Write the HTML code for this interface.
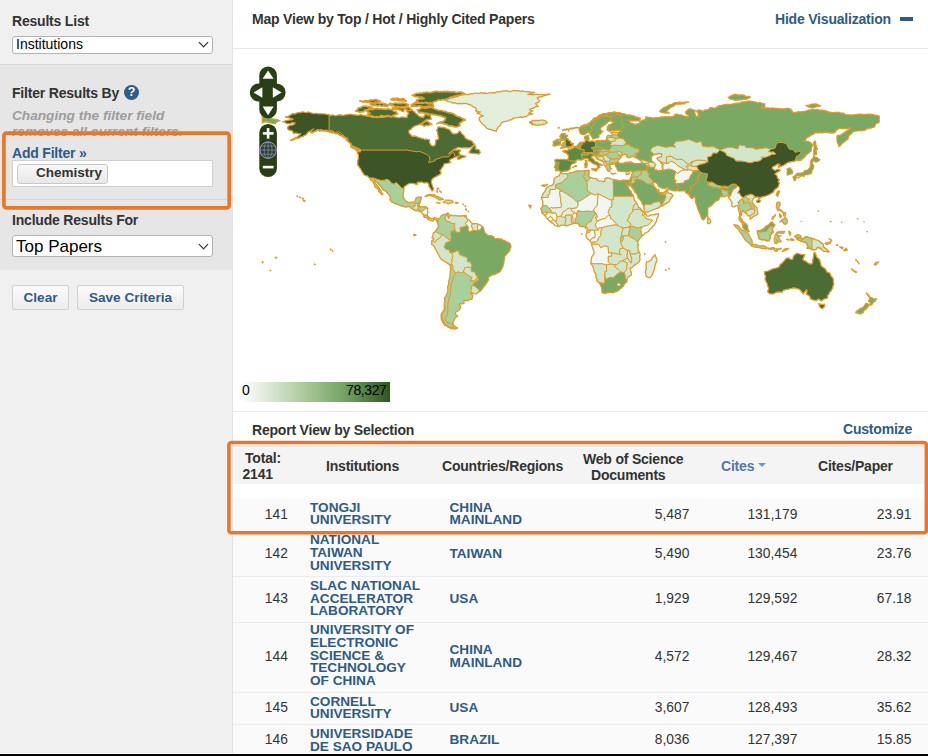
<!DOCTYPE html>
<html><head><meta charset="utf-8">
<style>
*{box-sizing:border-box;margin:0;padding:0}
html,body{width:928px;height:756px;overflow:hidden;background:#fff;font-family:"Liberation Sans",sans-serif}
.a{position:absolute;white-space:nowrap}
.b{font-weight:bold}
#side{position:absolute;left:0;top:0;width:233px;height:756px;background:#f0f0f0;border-right:1px solid #e2e2e2}
#filt{position:absolute;left:0;top:64px;width:232px;height:206px;background:#e6e6e6;border-top:1px solid #d8d8d8}
.h{font-size:14px;letter-spacing:-0.2px;font-weight:bold;color:#333}
.lnk{color:#2e5b8a}
.sel{position:absolute;background:#fff;border:1px solid #b3b3b3;border-radius:3px}
.chev{position:absolute;width:7px;height:7px;border-right:1.5px solid #222;border-bottom:1.5px solid #222;transform:rotate(45deg)}
.btn{position:absolute;border:1px solid #d0d0d0;background:linear-gradient(#fbfbfb,#ececec);border-radius:2px;font-size:13.6px;font-weight:bold;color:#2e5b8a;text-align:center}
#orange1{position:absolute;left:0;top:0}
#orange2{position:absolute;left:0;top:0}
.num{font-size:13.8px;color:#333}
.inst{font-size:13.6px;font-weight:bold;color:#2e5b8a;line-height:12.6px}
</style></head><body>
<div id="side"></div>
<div id="filt"></div>
<div class="a h" style="left:12px;top:12.5px">Results List</div>
<div class="sel" style="left:12px;top:36px;width:201px;height:18px"></div>
<div class="a" style="left:16px;top:36px;font-size:14px;color:#000">Institutions</div>
<div class="chev" style="left:200px;top:39px"></div>

<div class="a h" style="left:12px;top:84.5px">Filter Results By</div>
<div class="a" style="left:124px;top:84.6px;width:15px;height:15px;border-radius:50%;background:#2e5b8a;color:#fff;font-size:12.5px;font-weight:bold;text-align:center;line-height:15px">?</div>
<div class="a" style="left:12px;top:107.5px;font-size:13.65px;font-weight:bold;font-style:italic;color:#9c9c9c;line-height:16px">Changing the filter field<br>removes all current filters.</div>
<div class="a h lnk" style="left:12px;top:144.5px">Add Filter »</div>
<div class="a" style="left:12px;top:160px;width:201px;height:27px;background:#fff;border:1px solid #cfcfcf"></div>
<div class="a" style="left:17px;top:164px;width:91px;height:20px;border:1px solid #c8c8c8;border-radius:3px;background:linear-gradient(#f8f8f8,#e8e8e8)"></div>
<div class="a b" style="left:36px;top:165.3px;font-size:13.5px;color:#333">Chemistry</div>
<div class="a" style="left:0;top:199px;width:232px;height:1px;background:#d6d6d6"></div>
<svg id="orange1" width="232" height="220"><rect x="3.9" y="133.1" width="225.3" height="74.7" rx="2.5" fill="none" stroke="#e8772a" stroke-width="3.7"/></svg>

<div class="a h" style="left:12px;top:211.8px">Include Results For</div>
<div class="sel" style="left:12px;top:235px;width:201px;height:22px"></div>
<div class="a" style="left:16px;top:236.5px;font-size:17px;color:#000">Top Papers</div>
<div class="chev" style="left:200px;top:240.5px"></div>

<div class="btn" style="left:12px;top:285px;width:57px;height:25px;line-height:23px">Clear</div>
<div class="btn" style="left:77px;top:285px;width:107px;height:25px;line-height:23px">Save Criteria</div>

<!-- main -->
<div class="a h" style="left:252px;top:11px">Map View by Top / Hot / Highly Cited Papers</div>
<div class="a h lnk" style="left:775px;top:11px">Hide Visualization</div>
<div class="a" style="left:900px;top:17px;width:13px;height:4px;background:#2e5b8a"></div>
<div class="a" style="left:233px;top:48px;width:695px;height:1px;background:#e6e6e6"></div>

<div id="map"><svg class="a" style="left:0;top:0" width="928" height="410" viewBox="0 0 928 410">
<defs>
<clipPath id="cna"><path d="M282.6 121.6L284.4 121.5L285.9 120.6L287.8 120.4L289.7 119.9L291.4 119.9L293.1 119.4L291.5 118.7L290.0 118.0L287.7 117.6L285.4 117.0L287.1 116.6L288.8 116.0L291.4 114.4L293.0 113.7L294.9 114.0L296.5 113.1L298.4 112.7L300.3 112.6L302.0 111.9L303.7 112.0L305.3 112.6L306.9 112.3L308.6 112.0L310.2 112.7L311.9 113.1L313.6 113.6L315.4 113.4L317.1 113.4L318.8 113.8L320.5 113.6L322.2 113.9L324.0 113.9L325.7 114.1L327.3 114.6L329.1 114.7L330.7 115.5L332.6 114.8L334.2 115.3L335.9 115.8L338.0 115.0L340.2 114.8L341.9 115.2L343.6 115.3L345.3 114.8L347.5 114.6L349.6 114.1L351.6 114.3L353.6 114.8L355.6 114.9L357.8 115.3L359.9 114.8L361.6 114.6L363.3 115.5L365.0 115.3L366.5 116.0L368.2 116.0L369.7 116.5L371.3 116.9L372.7 117.5L374.6 117.1L376.5 117.6L378.4 117.6L380.3 117.1L382.2 117.5L383.9 117.3L385.6 116.8L387.3 116.5L389.0 116.5L390.7 117.1L392.5 116.4L394.2 116.8L395.9 117.1L397.6 117.6L399.3 117.9L401.4 117.0L403.6 117.2L405.3 117.5L407.0 117.5L407.4 115.2L408.7 113.2L407.4 112.0L406.2 110.7L408.1 110.2L410.2 110.6L412.1 109.8L413.2 111.0L414.6 111.9L415.6 113.2L417.4 114.6L419.0 116.3L421.1 116.9L423.3 117.5L424.2 116.1L425.0 114.6L426.7 114.6L428.4 115.0L430.1 114.9L430.6 117.1L431.3 119.2L429.5 119.5L427.6 119.3L425.9 120.1L424.1 121.6L422.3 123.0L419.9 124.2L417.8 125.1L415.6 125.7L413.8 126.6L412.1 127.8L411.3 129.2L409.6 129.8L408.7 131.2L409.2 133.3L410.7 134.8L412.1 136.4L414.3 136.0L416.4 136.4L418.0 137.4L419.9 137.6L421.2 138.6L423.0 138.5L424.5 139.3L426.2 139.1L427.9 139.3L429.6 139.6L429.3 141.4L429.8 143.2L430.9 145.0L432.7 146.1L434.8 145.6L435.3 144.0L435.7 142.4L435.6 140.6L437.1 139.6L438.7 138.8L438.2 136.5L437.8 134.3L437.6 132.2L436.6 130.4L437.5 128.9L437.7 127.3L439.7 126.9L441.8 127.5L443.8 127.3L445.5 128.1L447.2 128.9L449.0 129.3L450.5 130.8L451.5 132.6L453.0 133.6L454.6 134.0L457.5 133.3L459.6 130.9L460.9 132.2L461.8 133.8L463.7 135.2L464.7 137.2L465.9 138.6L467.5 139.4L469.1 140.1L470.8 140.5L472.3 141.5L473.1 143.1L474.7 144.1L472.6 146.1L470.8 147.3L468.7 147.8L467.0 147.8L465.3 147.7L463.5 147.8L461.8 147.8L460.1 147.7L458.4 147.5L456.7 148.0L455.2 148.9L453.7 149.6L452.4 150.7L451.2 151.9L449.9 152.8L448.6 153.8L450.2 152.6L451.9 151.5L453.3 150.1L455.2 149.8L457.3 150.1L459.3 149.7L460.6 150.7L458.9 152.5L459.9 154.7L462.7 155.5L464.4 155.9L466.1 156.2L464.1 157.4L461.8 157.8L460.0 159.0L457.9 159.3L457.2 157.3L460.1 156.2L457.9 156.1L455.8 156.9L454.1 157.6L452.4 158.5L450.2 159.3L449.5 161.0L450.7 162.4L448.1 163.1L446.1 163.3L444.2 163.9L443.7 164.8L443.3 166.3L442.1 167.5L440.9 169.6L439.9 170.6L441.1 173.0L439.6 174.7L437.2 175.9L434.9 177.1L433.5 178.0L432.2 179.0L431.2 181.8L431.8 184.0L432.3 186.1L433.4 187.9L432.9 190.8L431.7 190.8L430.5 188.4L428.9 186.0L428.9 184.0L426.7 182.4L424.1 183.0L421.6 181.9L419.9 182.2L418.1 182.1L417.1 182.6L417.8 184.2L415.6 184.2L414.1 183.6L412.5 183.3L409.6 183.3L407.0 184.8L405.6 185.8L404.1 186.7L403.8 189.6L403.7 191.7L403.2 193.7L403.1 196.3L404.1 198.7L405.8 201.1L408.2 202.3L410.2 202.3L412.1 202.1L414.7 201.8L415.7 199.6L415.9 198.0L417.4 197.4L419.0 197.2L421.6 197.2L420.7 199.7L420.2 202.3L419.3 204.0L419.3 206.6L422.4 206.9L424.1 206.7L425.9 206.9L427.9 208.3L427.6 210.9L428.0 212.6L427.4 214.3L427.7 216.0L429.6 217.9L431.8 218.9L434.4 217.7L436.5 218.2L438.0 219.3L438.4 220.5L436.6 221.2L436.0 219.6L433.9 219.3L432.7 221.3L431.0 220.3L428.4 219.8L426.7 217.7L423.8 217.0L423.6 214.8L421.6 212.6L420.2 211.4L417.6 210.9L415.9 210.5L414.2 210.2L412.1 208.8L410.6 207.9L409.6 206.4L407.4 206.8L405.3 207.1L403.6 206.5L401.9 206.1L400.2 205.3L398.5 204.6L396.7 204.0L394.9 203.7L393.3 202.7L391.2 201.6L389.9 199.7L390.2 197.2L389.2 194.9L387.8 193.5L386.5 192.0L385.2 190.8L383.5 190.1L382.4 189.0L381.8 187.4L379.6 185.2L378.4 184.0L377.4 182.6L375.8 181.0L374.1 179.7L375.0 182.3L376.1 184.2L377.4 186.0L378.7 187.4L379.6 189.1L380.8 190.7L381.5 192.5L383.0 194.3L381.8 194.6L380.4 192.8L378.6 191.5L378.2 188.8L376.4 187.9L374.8 186.7L374.4 184.9L373.6 183.3L372.5 181.3L370.7 179.9L370.0 178.3L368.6 177.3L367.6 175.8L365.7 175.7L364.0 174.7L363.0 173.0L361.8 171.3L360.8 169.2L359.5 167.6L358.5 165.8L357.5 164.8L357.8 162.1L357.8 160.2L358.4 158.5L358.3 156.7L358.4 154.9L357.6 153.0L357.0 151.1L358.6 151.7L360.2 151.8L360.6 150.1L359.0 149.0L356.5 147.8L354.4 146.9L352.2 146.3L351.0 144.1L349.4 142.6L347.9 141.0L346.2 138.4L344.4 137.3L342.8 136.0L341.1 135.7L339.7 134.9L338.5 133.6L336.8 133.3L335.1 133.4L333.3 132.2L331.1 131.9L329.2 131.9L327.4 131.2L325.6 131.1L324.0 130.3L322.2 130.5L320.5 130.8L318.8 130.2L317.1 130.2L315.5 130.9L314.0 131.7L312.3 132.1L310.6 132.6L311.9 129.8L313.7 129.0L312.3 129.8L311.0 130.9L309.4 131.2L307.1 132.9L306.5 134.6L304.3 135.4L302.5 136.7L300.6 136.9L299.1 138.1L296.9 138.2L294.8 138.9L292.8 140.1L290.5 140.3L293.1 138.8L294.9 138.1L296.5 137.2L298.3 136.1L299.9 135.0L300.8 133.6L299.1 134.0L297.4 133.4L295.4 133.0L293.4 133.6L292.8 131.2L290.6 130.3L288.3 129.8L287.4 127.8L288.8 125.9L290.8 125.2L293.0 124.9L294.8 123.7L295.1 122.8L292.8 122.7L290.5 123.3L288.4 123.7L286.2 123.3L284.6 122.2L282.6 121.6Z"/></clipPath>
<clipPath id="csa"><path d="M438.0 219.3L440.1 217.9L441.3 215.8L443.5 214.6L446.4 213.8L447.9 212.8L448.8 214.1L447.8 215.8L448.6 218.4L449.4 216.6L450.3 214.8L453.3 215.8L455.2 215.4L457.2 215.8L458.9 216.0L460.6 216.0L463.5 215.7L466.1 217.0L467.5 219.3L469.2 220.2L470.4 221.7L472.6 223.7L474.5 223.7L476.4 223.7L479.0 224.4L481.5 225.9L482.9 226.8L483.7 228.6L484.1 230.6L485.0 233.1L487.5 235.0L489.6 235.6L491.8 235.7L493.4 236.7L494.5 238.3L496.1 239.0L497.9 238.3L499.5 239.0L501.3 239.0L502.9 240.1L504.6 240.3L505.8 241.6L507.3 242.2L508.9 242.6L510.5 244.3L511.0 247.0L510.1 248.5L509.8 250.3L508.8 252.0L507.2 253.2L506.2 254.9L504.6 256.3L504.5 258.4L504.0 260.6L503.9 262.6L503.3 264.5L502.8 266.8L501.6 268.8L501.0 270.3L500.0 271.7L498.4 272.7L496.6 273.4L494.7 274.3L492.7 274.8L491.0 275.5L489.6 276.4L488.4 277.7L488.3 279.9L487.3 282.0L486.1 283.7L485.0 285.4L483.5 286.8L482.4 288.5L481.2 290.5L479.3 291.7L477.6 292.4L476.6 293.8L473.8 293.6L472.2 292.9L470.6 292.4L471.6 293.8L472.6 295.3L472.4 297.4L471.9 299.4L469.9 299.5L468.2 300.5L466.0 300.4L463.9 300.5L463.9 303.4L462.3 303.8L460.6 303.6L459.1 304.4L460.6 306.8L460.0 308.7L458.7 310.2L457.5 311.3L455.9 312.0L455.0 313.5L456.2 315.0L457.9 315.9L456.5 316.8L455.3 317.9L454.5 319.3L453.8 321.1L452.6 322.4L453.4 323.8L451.5 323.9L453.1 324.8L455.5 326.8L457.5 328.0L455.0 328.9L453.3 328.5L451.5 328.6L449.8 327.8L448.1 327.0L446.7 325.4L444.7 324.8L442.8 322.2L442.6 320.3L441.4 318.8L441.2 317.1L441.3 315.4L442.3 314.1L442.6 312.5L443.5 310.8L444.7 309.4L444.2 306.3L444.3 304.0L444.7 301.7L444.8 299.7L444.5 297.7L445.8 296.5L446.4 294.8L447.5 292.8L447.9 290.5L447.7 288.8L447.6 287.1L448.1 285.4L448.8 283.7L448.5 282.0L449.1 279.8L449.7 277.7L449.9 275.7L450.2 273.7L450.2 271.7L450.7 269.6L450.4 267.6L450.2 265.5L448.1 263.6L446.5 262.5L444.7 261.6L443.0 260.5L441.3 259.4L439.6 256.8L438.6 254.7L437.3 252.8L436.5 250.6L435.3 248.6L434.5 247.1L433.6 245.6L431.5 244.3L432.0 242.6L431.5 241.2L433.0 239.8L433.9 238.1L432.0 237.8L433.0 234.9L433.4 232.6L435.3 231.8L436.0 230.1L437.8 227.8L438.4 226.2L438.0 224.6L437.3 222.0L438.0 219.3Z"/></clipPath>
<clipPath id="caf"><path d="M560.5 172.7L562.9 173.7L564.9 173.6L566.8 173.9L568.8 173.4L570.6 172.7L572.8 172.3L574.9 171.3L577.0 170.9L579.2 171.0L581.2 170.9L583.3 170.8L585.3 170.8L588.1 170.3L589.6 170.8L588.6 171.8L589.6 173.7L587.9 175.2L589.8 177.0L592.0 177.8L593.6 178.3L595.2 178.6L596.8 178.7L597.5 180.2L599.3 181.2L601.4 181.2L604.2 181.8L605.0 180.2L604.9 178.7L607.4 177.6L610.0 178.2L611.5 179.1L613.3 179.4L616.0 179.9L618.2 180.4L620.3 181.1L622.8 180.0L625.9 180.4L627.6 180.1L629.2 180.4L629.9 181.9L630.4 183.5L629.4 186.0L627.5 185.2L626.4 182.8L626.6 185.0L627.8 186.6L628.7 188.3L629.6 189.9L631.1 191.2L631.6 193.1L632.6 194.7L633.6 196.3L633.9 198.5L634.5 200.6L635.9 201.6L636.7 203.2L637.8 205.3L638.6 207.4L640.2 208.2L641.2 209.7L642.7 210.9L643.9 212.4L644.8 213.6L646.2 214.6L647.0 216.2L649.1 215.8L651.1 214.8L653.3 214.8L655.4 214.5L656.9 213.9L658.5 213.6L658.1 216.2L656.9 218.6L656.6 220.9L655.4 222.9L654.5 224.9L652.8 226.3L652.0 227.8L650.5 228.9L649.4 230.2L648.2 231.5L646.8 232.5L645.1 233.1L644.2 234.5L642.6 235.2L641.7 236.6L640.4 237.7L639.3 239.1L638.0 241.1L637.7 243.4L638.2 245.4L637.9 247.4L638.1 249.3L638.6 251.1L640.0 253.7L639.9 255.7L639.6 257.7L640.1 259.7L639.2 261.5L637.7 262.9L636.2 264.1L634.5 265.1L633.1 266.4L631.9 267.6L630.2 268.1L630.5 270.4L631.4 272.5L631.4 275.1L629.7 275.9L628.2 277.0L627.0 278.4L627.1 280.2L626.8 282.0L625.2 283.0L624.2 284.5L623.3 286.2L622.0 287.6L620.1 288.7L618.6 290.2L617.0 291.4L615.1 291.9L613.5 292.5L611.7 292.4L610.0 292.3L608.3 292.6L606.5 292.9L604.9 293.6L602.1 292.6L601.8 289.7L601.7 287.8L600.9 286.2L600.1 284.5L599.3 282.9L598.3 281.6L596.8 280.6L596.9 278.7L595.7 277.1L596.2 275.1L595.4 273.4L594.2 271.4L593.6 269.1L593.0 267.1L592.1 265.1L590.8 263.5L591.0 261.6L591.3 259.8L591.5 258.0L592.0 256.3L592.9 255.0L594.1 253.7L594.0 251.5L593.2 249.4L592.6 247.8L592.0 246.2L591.7 244.4L590.8 241.7L589.7 240.5L588.3 239.5L587.0 238.3L586.2 236.7L586.0 234.9L586.9 232.8L587.0 230.6L587.4 228.0L585.3 226.3L582.6 226.5L580.0 226.3L578.8 225.0L578.3 223.2L576.6 223.7L574.9 223.2L573.2 223.6L571.5 224.1L569.3 224.9L567.2 225.8L565.0 225.7L562.9 225.1L561.1 225.1L559.5 226.2L557.8 226.5L554.8 225.3L553.3 223.5L551.2 222.4L549.6 221.0L548.0 219.6L546.7 218.3L545.8 216.7L544.0 214.8L541.8 212.8L541.7 210.2L540.6 208.8L542.3 206.6L542.9 204.5L542.8 202.3L542.3 200.1L541.3 198.0L541.9 196.2L542.8 194.6L543.6 192.9L544.9 191.5L545.8 189.3L546.7 187.7L548.2 186.5L550.9 185.7L552.4 185.0L553.5 183.6L554.0 181.6L553.8 180.0L554.6 178.3L556.0 177.0L559.0 175.8L559.9 174.3L560.5 172.7Z"/></clipPath>
<clipPath id="ceu"><path d="M561.0 172.3L559.5 170.8L557.9 170.3L555.4 170.6L555.5 168.0L554.3 167.5L555.4 165.1L555.5 162.2L554.7 160.3L556.9 159.1L558.8 159.7L560.7 159.3L562.6 159.3L564.6 159.5L567.5 159.7L568.4 157.8L568.5 155.5L566.8 153.5L564.6 152.3L562.5 151.3L565.1 150.4L567.9 150.6L568.2 148.9L570.9 149.2L573.2 148.0L574.9 146.5L576.8 146.0L578.5 144.1L580.0 142.5L582.6 142.2L585.0 142.2L585.3 139.8L584.5 137.2L585.3 136.2L587.1 135.8L588.8 135.2L588.4 137.2L589.1 138.9L587.7 140.1L589.4 141.5L592.0 140.8L594.9 141.7L596.8 140.7L598.9 140.6L600.7 140.9L602.3 140.1L604.2 140.8L606.9 139.4L606.7 137.2L607.6 135.7L609.3 135.2L611.5 136.2L612.4 134.3L610.9 132.9L613.4 132.1L615.1 132.4L616.9 132.3L618.6 132.1L620.4 131.6L622.3 131.4L619.4 130.4L617.7 130.3L616.0 130.5L614.0 130.7L611.9 130.6L610.0 131.4L608.4 130.9L607.1 129.8L607.4 126.9L609.1 124.7L611.1 124.3L612.6 123.0L614.1 122.0L612.2 121.3L610.2 120.9L608.3 121.5L606.9 123.0L605.6 124.3L604.0 125.2L602.5 126.5L600.7 127.3L600.2 129.5L602.8 131.4L601.8 132.4L600.5 133.9L598.9 134.8L598.9 137.2L597.7 137.9L595.4 138.1L592.9 139.1L592.4 137.6L590.6 135.0L589.4 132.9L588.6 132.1L587.2 132.9L585.8 133.8L584.3 134.5L581.7 134.5L580.2 133.3L579.2 130.4L579.2 127.8L581.0 127.2L582.6 126.1L584.6 125.0L586.9 124.7L588.3 123.3L590.3 122.7L591.2 121.0L592.9 120.1L594.4 119.4L595.4 118.0L598.0 116.5L599.7 115.6L601.4 114.8L603.5 113.9L605.7 113.7L607.4 113.3L609.0 112.6L610.9 112.7L613.0 112.7L615.1 112.2L617.2 112.8L619.4 112.5L621.5 113.3L623.7 113.6L625.4 114.3L627.1 115.1L628.9 114.8L630.6 115.1L632.3 115.6L634.4 116.0L636.2 117.2L638.3 117.5L640.8 118.4L639.1 120.4L637.4 120.8L635.7 120.9L634.0 120.5L632.3 120.9L630.6 120.6L628.0 120.1L629.5 121.0L630.2 122.7L633.1 123.7L635.7 124.4L637.8 123.7L640.0 123.5L639.1 121.3L641.1 120.9L642.9 120.1L644.6 119.7L646.3 120.1L645.6 118.4L646.0 116.7L647.6 117.4L649.4 117.5L651.1 117.7L652.8 118.2L654.5 117.8L656.2 117.5L658.3 117.8L660.2 117.1L662.2 117.0L664.0 116.9L665.7 116.7L667.4 116.9L669.1 116.5L670.8 116.9L672.5 116.7L674.1 115.8L675.1 114.4L677.1 114.2L679.1 115.0L681.1 114.8L683.1 115.9L685.4 116.1L687.6 117.2L688.8 115.8L687.5 114.8L686.2 113.7L685.4 112.0L687.1 110.5L688.8 109.0L690.5 109.0L692.2 109.3L693.7 110.1L695.3 110.3L694.6 112.4L695.2 114.2L695.5 116.1L698.2 116.3L698.2 113.2L696.5 111.0L699.1 109.8L701.6 110.7L703.4 111.5L704.2 110.2L706.3 109.9L708.5 109.8L709.4 108.1L711.2 107.7L713.1 108.0L715.0 108.2L716.9 107.0L718.8 107.4L717.9 106.4L719.6 105.5L721.4 105.6L723.1 104.9L724.8 104.7L726.5 104.5L728.2 104.5L729.9 104.3L731.6 104.1L733.3 103.8L735.0 103.5L736.7 103.2L738.5 103.1L740.2 103.0L741.8 102.0L743.5 101.8L745.3 101.9L747.0 101.2L748.8 101.1L750.5 101.1L752.3 101.3L753.9 102.1L755.6 101.9L757.3 103.0L759.1 102.4L760.7 102.8L762.8 103.7L765.0 104.0L764.5 105.6L765.0 107.2L762.9 107.5L760.7 107.9L762.9 107.7L765.0 108.4L766.7 107.9L768.4 107.9L770.2 108.3L771.9 107.9L773.6 108.1L775.5 108.3L777.4 108.5L779.4 108.6L781.3 109.0L783.3 108.8L785.4 108.8L787.3 108.1L789.0 108.6L790.7 109.3L792.0 110.4L792.4 112.0L794.1 112.7L795.9 112.5L798.4 111.5L800.1 112.0L801.9 111.6L803.6 111.5L805.4 111.3L807.0 110.6L808.7 110.0L810.5 110.0L812.1 109.5L813.9 109.5L815.6 109.7L817.3 109.4L819.0 110.0L820.7 110.2L822.5 110.0L824.2 110.5L825.9 110.8L827.5 111.5L829.7 112.1L831.8 112.5L833.8 112.7L835.7 112.5L837.6 112.3L839.5 112.4L841.1 113.3L843.1 113.0L844.7 114.1L846.4 114.8L848.1 114.8L849.8 114.9L851.5 115.1L853.2 114.8L855.4 114.7L857.5 114.4L859.7 114.1L861.8 114.1L863.9 114.6L866.1 114.3L868.1 114.2L870.1 114.1L872.1 114.4L873.8 114.8L875.5 115.4L877.2 115.4L878.9 115.8L879.4 117.5L879.0 119.2L879.3 120.9L878.9 122.7L876.4 123.3L875.2 125.0L874.7 126.9L872.7 127.4L870.8 128.2L868.7 128.1L866.9 128.8L865.4 130.0L863.5 130.4L861.4 130.6L859.2 130.4L857.1 130.9L855.0 131.2L852.9 131.6L851.7 133.4L849.8 134.6L848.6 136.4L847.8 139.3L846.1 140.3L844.7 141.5L842.1 143.4L840.7 145.2L839.0 146.6L838.5 144.9L837.8 143.2L837.0 141.2L837.0 138.9L836.9 137.2L837.5 135.5L839.5 135.5L841.3 134.6L842.9 133.4L844.7 132.2L846.3 131.1L848.1 130.4L849.7 129.0L850.7 127.3L848.7 128.4L846.4 128.7L843.8 128.7L842.1 128.6L840.4 128.2L838.7 128.7L837.0 129.6L835.8 131.0L834.7 132.6L832.4 133.1L830.1 132.8L828.0 132.6L825.8 132.2L823.8 132.5L821.9 132.9L819.8 132.4L818.2 133.0L816.4 132.6L814.7 132.9L813.2 134.3L811.3 135.0L809.7 136.3L807.9 137.2L806.4 138.1L805.8 139.7L804.4 140.6L806.5 141.5L808.7 141.5L811.3 143.2L812.6 144.9L812.1 146.7L811.3 148.3L811.1 150.9L809.4 152.3L807.9 153.8L806.3 154.7L805.3 156.1L804.2 157.5L802.7 158.6L801.3 160.0L799.3 160.5L796.7 160.0L795.0 161.0L794.3 161.5L792.6 161.4L789.9 162.1L788.0 162.4L786.4 163.6L784.7 164.6L783.2 165.7L782.2 165.8L779.6 166.9L778.2 167.5L778.7 165.8L780.1 164.6L777.9 163.9L775.3 165.7L772.7 166.9L772.2 168.4L774.1 169.8L775.3 170.4L777.5 169.2L780.4 170.3L779.0 171.6L777.0 172.2L774.8 174.0L776.7 175.2L777.7 178.2L779.4 179.9L777.9 181.6L779.6 183.0L778.9 184.4L778.6 186.0L777.4 187.7L775.8 188.8L774.4 190.1L773.6 191.9L771.0 193.7L768.5 194.9L766.2 195.8L764.2 196.3L761.6 197.0L759.9 198.0L759.0 199.2L758.3 197.2L756.5 197.0L753.9 198.0L753.0 199.2L751.8 201.5L753.0 203.2L754.1 204.7L755.3 206.1L757.1 208.0L757.0 209.9L757.8 211.7L757.7 214.1L755.6 215.5L753.5 216.4L752.2 217.7L750.1 219.3L750.3 217.0L749.6 216.0L747.9 215.8L746.4 213.4L744.1 212.2L743.4 210.9L742.1 211.0L741.9 212.8L741.5 214.7L740.5 216.4L740.7 218.2L742.4 219.8L742.8 221.7L744.1 222.2L745.7 223.4L747.7 225.8L747.7 228.2L748.2 229.7L749.1 231.6L747.9 231.8L746.2 230.6L744.1 229.2L742.9 227.1L742.6 224.6L742.2 222.9L741.4 222.2L739.3 220.0L739.0 217.7L739.7 215.3L739.3 212.6L738.8 210.5L738.3 208.7L738.0 206.8L737.4 205.6L735.9 205.7L734.0 206.9L732.1 206.6L731.7 204.5L732.1 202.3L730.8 200.6L729.6 198.9L728.5 197.7L727.9 195.3L726.5 195.5L725.3 196.5L723.1 196.7L721.3 196.3L719.5 197.5L718.8 199.9L715.9 201.1L714.4 202.1L713.3 203.5L711.4 205.6L709.7 206.5L708.2 207.4L707.7 209.1L707.8 210.9L707.8 212.7L707.7 214.5L707.5 216.4L706.3 216.4L704.6 218.8L703.4 220.1L701.8 218.8L700.8 216.0L699.9 213.8L699.2 212.1L698.4 210.4L697.4 207.8L697.0 205.8L696.2 204.0L695.3 201.1L695.5 199.4L695.1 197.7L694.8 196.0L693.6 197.1L692.6 198.4L691.4 198.4L690.3 196.9L689.0 195.8L690.7 194.8L688.3 194.1L686.1 192.9L684.7 190.5L682.9 190.8L681.1 190.8L679.4 191.1L677.8 190.3L676.1 190.8L674.3 190.9L672.5 190.5L670.7 189.8L668.8 189.8L668.1 187.7L666.5 187.6L664.1 188.6L662.2 188.1L660.3 187.5L658.6 186.2L657.7 184.6L656.6 183.1L654.4 182.1L652.8 182.8L653.5 185.2L655.1 187.4L656.6 188.9L657.6 191.2L658.5 189.3L659.0 190.7L659.0 192.4L661.2 192.7L664.0 192.4L666.4 190.3L667.0 188.9L667.2 191.3L668.9 193.1L671.3 193.7L673.0 195.6L671.5 197.5L670.3 199.1L669.4 201.5L667.6 202.7L665.3 203.9L663.6 204.9L662.3 206.0L660.5 206.2L658.5 208.0L656.9 208.4L655.4 209.0L652.8 210.0L650.3 211.0L647.7 212.1L645.1 212.2L644.6 211.2L643.9 208.3L643.6 205.7L642.0 203.5L641.7 201.9L640.7 200.6L639.7 199.3L638.4 198.2L637.6 195.8L636.6 193.4L634.8 192.4L634.0 190.1L632.6 188.4L630.7 185.9L630.4 183.5L629.5 181.9L629.7 180.0L630.6 177.8L631.4 175.8L632.1 173.4L632.6 171.3L631.9 171.0L629.9 171.0L628.1 171.7L626.3 172.2L624.7 171.4L623.0 171.1L620.3 171.3L617.7 170.6L617.2 168.9L616.2 167.2L615.3 165.5L615.7 164.5L613.4 163.9L611.5 164.3L609.7 164.6L609.3 165.5L610.5 166.9L609.8 168.0L611.7 168.7L610.0 169.1L609.7 171.5L607.8 171.0L606.9 169.4L606.7 168.4L605.7 166.7L604.7 165.8L603.8 164.6L604.0 162.4L602.3 161.4L600.4 160.3L598.0 159.5L596.3 158.3L595.6 156.6L593.9 155.7L591.7 156.2L591.8 158.1L593.7 159.3L594.6 161.0L596.5 162.1L598.0 162.2L598.0 163.1L600.6 164.1L602.3 165.1L601.9 165.8L599.7 164.6L599.0 166.2L600.1 167.2L598.7 168.0L597.5 168.9L597.7 167.4L597.3 165.3L596.0 164.5L594.6 164.1L592.9 163.4L590.8 161.7L589.6 161.2L588.6 160.3L588.2 159.0L586.4 158.1L584.3 158.8L582.2 159.8L580.0 160.0L577.8 159.5L575.9 160.5L576.1 162.1L574.0 163.4L572.1 163.9L570.6 165.7L570.1 167.4L570.6 167.9L569.4 169.6L567.2 171.0L564.6 171.1L562.7 171.5L561.0 172.3Z"/></clipPath>
</defs>
<g stroke="#e09b2a" stroke-linejoin="round">
<path d="M282.6 121.6L284.4 121.5L285.9 120.6L287.8 120.4L289.7 119.9L291.4 119.9L293.1 119.4L291.5 118.7L290.0 118.0L287.7 117.6L285.4 117.0L287.1 116.6L288.8 116.0L291.4 114.4L293.0 113.7L294.9 114.0L296.5 113.1L298.4 112.7L300.3 112.6L302.0 111.9L303.7 112.0L305.3 112.6L306.9 112.3L308.6 112.0L310.2 112.7L311.9 113.1L313.6 113.6L315.4 113.4L317.1 113.4L318.8 113.8L320.5 113.6L322.2 113.9L324.0 113.9L325.7 114.1L327.3 114.6L329.1 114.7L330.7 115.5L332.6 114.8L334.2 115.3L335.9 115.8L338.0 115.0L340.2 114.8L341.9 115.2L343.6 115.3L345.3 114.8L347.5 114.6L349.6 114.1L351.6 114.3L353.6 114.8L355.6 114.9L357.8 115.3L359.9 114.8L361.6 114.6L363.3 115.5L365.0 115.3L366.5 116.0L368.2 116.0L369.7 116.5L371.3 116.9L372.7 117.5L374.6 117.1L376.5 117.6L378.4 117.6L380.3 117.1L382.2 117.5L383.9 117.3L385.6 116.8L387.3 116.5L389.0 116.5L390.7 117.1L392.5 116.4L394.2 116.8L395.9 117.1L397.6 117.6L399.3 117.9L401.4 117.0L403.6 117.2L405.3 117.5L407.0 117.5L407.4 115.2L408.7 113.2L407.4 112.0L406.2 110.7L408.1 110.2L410.2 110.6L412.1 109.8L413.2 111.0L414.6 111.9L415.6 113.2L417.4 114.6L419.0 116.3L421.1 116.9L423.3 117.5L424.2 116.1L425.0 114.6L426.7 114.6L428.4 115.0L430.1 114.9L430.6 117.1L431.3 119.2L429.5 119.5L427.6 119.3L425.9 120.1L424.1 121.6L422.3 123.0L419.9 124.2L417.8 125.1L415.6 125.7L413.8 126.6L412.1 127.8L411.3 129.2L409.6 129.8L408.7 131.2L409.2 133.3L410.7 134.8L412.1 136.4L414.3 136.0L416.4 136.4L418.0 137.4L419.9 137.6L421.2 138.6L423.0 138.5L424.5 139.3L426.2 139.1L427.9 139.3L429.6 139.6L429.3 141.4L429.8 143.2L430.9 145.0L432.7 146.1L434.8 145.6L435.3 144.0L435.7 142.4L435.6 140.6L437.1 139.6L438.7 138.8L438.2 136.5L437.8 134.3L437.6 132.2L436.6 130.4L437.5 128.9L437.7 127.3L439.7 126.9L441.8 127.5L443.8 127.3L445.5 128.1L447.2 128.9L449.0 129.3L450.5 130.8L451.5 132.6L453.0 133.6L454.6 134.0L457.5 133.3L459.6 130.9L460.9 132.2L461.8 133.8L463.7 135.2L464.7 137.2L465.9 138.6L467.5 139.4L469.1 140.1L470.8 140.5L472.3 141.5L473.1 143.1L474.7 144.1L472.6 146.1L470.8 147.3L468.7 147.8L467.0 147.8L465.3 147.7L463.5 147.8L461.8 147.8L460.1 147.7L458.4 147.5L456.7 148.0L455.2 148.9L453.7 149.6L452.4 150.7L451.2 151.9L449.9 152.8L448.6 153.8L450.2 152.6L451.9 151.5L453.3 150.1L455.2 149.8L457.3 150.1L459.3 149.7L460.6 150.7L458.9 152.5L459.9 154.7L462.7 155.5L464.4 155.9L466.1 156.2L464.1 157.4L461.8 157.8L460.0 159.0L457.9 159.3L457.2 157.3L460.1 156.2L457.9 156.1L455.8 156.9L454.1 157.6L452.4 158.5L450.2 159.3L449.5 161.0L450.7 162.4L448.1 163.1L446.1 163.3L444.2 163.9L443.7 164.8L443.3 166.3L442.1 167.5L440.9 169.6L439.9 170.6L441.1 173.0L439.6 174.7L437.2 175.9L434.9 177.1L433.5 178.0L432.2 179.0L431.2 181.8L431.8 184.0L432.3 186.1L433.4 187.9L432.9 190.8L431.7 190.8L430.5 188.4L428.9 186.0L428.9 184.0L426.7 182.4L424.1 183.0L421.6 181.9L419.9 182.2L418.1 182.1L417.1 182.6L417.8 184.2L415.6 184.2L414.1 183.6L412.5 183.3L409.6 183.3L407.0 184.8L405.6 185.8L404.1 186.7L403.8 189.6L403.7 191.7L403.2 193.7L403.1 196.3L404.1 198.7L405.8 201.1L408.2 202.3L410.2 202.3L412.1 202.1L414.7 201.8L415.7 199.6L415.9 198.0L417.4 197.4L419.0 197.2L421.6 197.2L420.7 199.7L420.2 202.3L419.3 204.0L419.3 206.6L422.4 206.9L424.1 206.7L425.9 206.9L427.9 208.3L427.6 210.9L428.0 212.6L427.4 214.3L427.7 216.0L429.6 217.9L431.8 218.9L434.4 217.7L436.5 218.2L438.0 219.3L438.4 220.5L436.6 221.2L436.0 219.6L433.9 219.3L432.7 221.3L431.0 220.3L428.4 219.8L426.7 217.7L423.8 217.0L423.6 214.8L421.6 212.6L420.2 211.4L417.6 210.9L415.9 210.5L414.2 210.2L412.1 208.8L410.6 207.9L409.6 206.4L407.4 206.8L405.3 207.1L403.6 206.5L401.9 206.1L400.2 205.3L398.5 204.6L396.7 204.0L394.9 203.7L393.3 202.7L391.2 201.6L389.9 199.7L390.2 197.2L389.2 194.9L387.8 193.5L386.5 192.0L385.2 190.8L383.5 190.1L382.4 189.0L381.8 187.4L379.6 185.2L378.4 184.0L377.4 182.6L375.8 181.0L374.1 179.7L375.0 182.3L376.1 184.2L377.4 186.0L378.7 187.4L379.6 189.1L380.8 190.7L381.5 192.5L383.0 194.3L381.8 194.6L380.4 192.8L378.6 191.5L378.2 188.8L376.4 187.9L374.8 186.7L374.4 184.9L373.6 183.3L372.5 181.3L370.7 179.9L370.0 178.3L368.6 177.3L367.6 175.8L365.7 175.7L364.0 174.7L363.0 173.0L361.8 171.3L360.8 169.2L359.5 167.6L358.5 165.8L357.5 164.8L357.8 162.1L357.8 160.2L358.4 158.5L358.3 156.7L358.4 154.9L357.6 153.0L357.0 151.1L358.6 151.7L360.2 151.8L360.6 150.1L359.0 149.0L356.5 147.8L354.4 146.9L352.2 146.3L351.0 144.1L349.4 142.6L347.9 141.0L346.2 138.4L344.4 137.3L342.8 136.0L341.1 135.7L339.7 134.9L338.5 133.6L336.8 133.3L335.1 133.4L333.3 132.2L331.1 131.9L329.2 131.9L327.4 131.2L325.6 131.1L324.0 130.3L322.2 130.5L320.5 130.8L318.8 130.2L317.1 130.2L315.5 130.9L314.0 131.7L312.3 132.1L310.6 132.6L311.9 129.8L313.7 129.0L312.3 129.8L311.0 130.9L309.4 131.2L307.1 132.9L306.5 134.6L304.3 135.4L302.5 136.7L300.6 136.9L299.1 138.1L296.9 138.2L294.8 138.9L292.8 140.1L290.5 140.3L293.1 138.8L294.9 138.1L296.5 137.2L298.3 136.1L299.9 135.0L300.8 133.6L299.1 134.0L297.4 133.4L295.4 133.0L293.4 133.6L292.8 131.2L290.6 130.3L288.3 129.8L287.4 127.8L288.8 125.9L290.8 125.2L293.0 124.9L294.8 123.7L295.1 122.8L292.8 122.7L290.5 123.3L288.4 123.7L286.2 123.3L284.6 122.2L282.6 121.6Z" fill="#4b6c32" stroke="none"/>
<g clip-path="url(#cna)" stroke-width="1.0">
<path d="M347.9 150.1L407.5 150.1L407.5 149.4L408.2 150.4L417.3 151.8L419.2 151.3L425.2 153.7L426.4 154.3L427.6 155.4L429.3 156.4L430.0 160.3L428.2 162.1L429.3 162.6L435.3 160.7L434.9 159.5L439.6 158.3L442.1 156.9L448.1 156.9L449.3 156.2L450.7 154.0L452.1 152.8L453.8 153.0L454.5 153.5L454.5 155.9L455.8 156.9L467.8 165.5L442.1 199.7L404.2 189.5L400.2 186.9L398.8 185.0L396.9 183.0L395.2 183.0L394.0 184.3L391.6 183.3L388.2 179.5L385.3 179.5L385.3 180.4L380.3 180.4L373.9 178.3L374.1 178.0L370.0 178.3L356.5 179.2Z" fill="#3c5426"/>
<path d="M262.3 105.5L329.1 105.5L329.1 130.7L332.3 130.7L335.1 132.9L336.8 132.1L338.5 131.6L341.9 133.8L344.8 137.0L347.9 138.2L347.9 140.3L339.3 143.2L262.3 148.3Z" fill="#3c5426"/>
<path d="M370.0 178.3L374.1 178.0L373.9 178.3L380.3 180.4L385.3 180.4L385.3 179.5L388.2 179.5L391.6 183.3L394.0 184.3L395.2 183.0L396.9 183.0L398.8 185.0L400.2 186.9L404.2 189.5L407.9 191.2L419.9 196.3L421.6 197.0L420.9 202.3L419.3 202.3L417.9 203.5L414.8 203.5L414.7 204.5L415.7 205.9L413.5 206.6L412.7 208.0L412.7 209.2L411.3 213.4L365.0 199.7L365.0 179.2Z" fill="#a9d09a"/>
<path d="M412.7 209.2L412.7 208.0L413.5 206.6L415.7 205.9L414.7 204.5L414.8 203.5L417.9 203.5L417.8 206.8L419.5 207.1L417.5 209.3L416.3 210.5Z" fill="#d2e6cb"/>
<path d="M417.9 203.5L419.3 202.3L420.7 203.2L419.5 207.1L417.8 206.8Z" fill="#a9d09a"/>
<path d="M417.5 209.3L419.5 207.1L423.3 205.7L428.2 208.3L425.9 208.6L424.7 209.5L422.1 211.2L420.7 211.7L419.9 210.2Z" fill="#a9d09a"/>
<path d="M416.3 210.5L417.5 209.3L419.9 210.2L420.2 211.4L418.1 212.6Z" fill="#d2e6cb"/>
<path d="M420.7 211.7L422.1 211.2L424.7 209.5L425.9 208.6L428.2 208.3L429.3 208.3L427.4 215.3L423.8 215.0L420.7 213.4Z" fill="#f2f6f0"/>
<path d="M423.8 215.0L427.4 215.3L429.1 217.7L428.6 220.3L423.3 218.6Z" fill="#a9d09a"/>
<path d="M429.1 217.7L428.6 220.3L433.6 222.9L438.7 222.0L438.7 217.7Z" fill="#d2e6cb"/>
</g>
<path d="M282.6 121.6L284.4 121.5L285.9 120.6L287.8 120.4L289.7 119.9L291.4 119.9L293.1 119.4L291.5 118.7L290.0 118.0L287.7 117.6L285.4 117.0L287.1 116.6L288.8 116.0L291.4 114.4L293.0 113.7L294.9 114.0L296.5 113.1L298.4 112.7L300.3 112.6L302.0 111.9L303.7 112.0L305.3 112.6L306.9 112.3L308.6 112.0L310.2 112.7L311.9 113.1L313.6 113.6L315.4 113.4L317.1 113.4L318.8 113.8L320.5 113.6L322.2 113.9L324.0 113.9L325.7 114.1L327.3 114.6L329.1 114.7L330.7 115.5L332.6 114.8L334.2 115.3L335.9 115.8L338.0 115.0L340.2 114.8L341.9 115.2L343.6 115.3L345.3 114.8L347.5 114.6L349.6 114.1L351.6 114.3L353.6 114.8L355.6 114.9L357.8 115.3L359.9 114.8L361.6 114.6L363.3 115.5L365.0 115.3L366.5 116.0L368.2 116.0L369.7 116.5L371.3 116.9L372.7 117.5L374.6 117.1L376.5 117.6L378.4 117.6L380.3 117.1L382.2 117.5L383.9 117.3L385.6 116.8L387.3 116.5L389.0 116.5L390.7 117.1L392.5 116.4L394.2 116.8L395.9 117.1L397.6 117.6L399.3 117.9L401.4 117.0L403.6 117.2L405.3 117.5L407.0 117.5L407.4 115.2L408.7 113.2L407.4 112.0L406.2 110.7L408.1 110.2L410.2 110.6L412.1 109.8L413.2 111.0L414.6 111.9L415.6 113.2L417.4 114.6L419.0 116.3L421.1 116.9L423.3 117.5L424.2 116.1L425.0 114.6L426.7 114.6L428.4 115.0L430.1 114.9L430.6 117.1L431.3 119.2L429.5 119.5L427.6 119.3L425.9 120.1L424.1 121.6L422.3 123.0L419.9 124.2L417.8 125.1L415.6 125.7L413.8 126.6L412.1 127.8L411.3 129.2L409.6 129.8L408.7 131.2L409.2 133.3L410.7 134.8L412.1 136.4L414.3 136.0L416.4 136.4L418.0 137.4L419.9 137.6L421.2 138.6L423.0 138.5L424.5 139.3L426.2 139.1L427.9 139.3L429.6 139.6L429.3 141.4L429.8 143.2L430.9 145.0L432.7 146.1L434.8 145.6L435.3 144.0L435.7 142.4L435.6 140.6L437.1 139.6L438.7 138.8L438.2 136.5L437.8 134.3L437.6 132.2L436.6 130.4L437.5 128.9L437.7 127.3L439.7 126.9L441.8 127.5L443.8 127.3L445.5 128.1L447.2 128.9L449.0 129.3L450.5 130.8L451.5 132.6L453.0 133.6L454.6 134.0L457.5 133.3L459.6 130.9L460.9 132.2L461.8 133.8L463.7 135.2L464.7 137.2L465.9 138.6L467.5 139.4L469.1 140.1L470.8 140.5L472.3 141.5L473.1 143.1L474.7 144.1L472.6 146.1L470.8 147.3L468.7 147.8L467.0 147.8L465.3 147.7L463.5 147.8L461.8 147.8L460.1 147.7L458.4 147.5L456.7 148.0L455.2 148.9L453.7 149.6L452.4 150.7L451.2 151.9L449.9 152.8L448.6 153.8L450.2 152.6L451.9 151.5L453.3 150.1L455.2 149.8L457.3 150.1L459.3 149.7L460.6 150.7L458.9 152.5L459.9 154.7L462.7 155.5L464.4 155.9L466.1 156.2L464.1 157.4L461.8 157.8L460.0 159.0L457.9 159.3L457.2 157.3L460.1 156.2L457.9 156.1L455.8 156.9L454.1 157.6L452.4 158.5L450.2 159.3L449.5 161.0L450.7 162.4L448.1 163.1L446.1 163.3L444.2 163.9L443.7 164.8L443.3 166.3L442.1 167.5L440.9 169.6L439.9 170.6L441.1 173.0L439.6 174.7L437.2 175.9L434.9 177.1L433.5 178.0L432.2 179.0L431.2 181.8L431.8 184.0L432.3 186.1L433.4 187.9L432.9 190.8L431.7 190.8L430.5 188.4L428.9 186.0L428.9 184.0L426.7 182.4L424.1 183.0L421.6 181.9L419.9 182.2L418.1 182.1L417.1 182.6L417.8 184.2L415.6 184.2L414.1 183.6L412.5 183.3L409.6 183.3L407.0 184.8L405.6 185.8L404.1 186.7L403.8 189.6L403.7 191.7L403.2 193.7L403.1 196.3L404.1 198.7L405.8 201.1L408.2 202.3L410.2 202.3L412.1 202.1L414.7 201.8L415.7 199.6L415.9 198.0L417.4 197.4L419.0 197.2L421.6 197.2L420.7 199.7L420.2 202.3L419.3 204.0L419.3 206.6L422.4 206.9L424.1 206.7L425.9 206.9L427.9 208.3L427.6 210.9L428.0 212.6L427.4 214.3L427.7 216.0L429.6 217.9L431.8 218.9L434.4 217.7L436.5 218.2L438.0 219.3L438.4 220.5L436.6 221.2L436.0 219.6L433.9 219.3L432.7 221.3L431.0 220.3L428.4 219.8L426.7 217.7L423.8 217.0L423.6 214.8L421.6 212.6L420.2 211.4L417.6 210.9L415.9 210.5L414.2 210.2L412.1 208.8L410.6 207.9L409.6 206.4L407.4 206.8L405.3 207.1L403.6 206.5L401.9 206.1L400.2 205.3L398.5 204.6L396.7 204.0L394.9 203.7L393.3 202.7L391.2 201.6L389.9 199.7L390.2 197.2L389.2 194.9L387.8 193.5L386.5 192.0L385.2 190.8L383.5 190.1L382.4 189.0L381.8 187.4L379.6 185.2L378.4 184.0L377.4 182.6L375.8 181.0L374.1 179.7L375.0 182.3L376.1 184.2L377.4 186.0L378.7 187.4L379.6 189.1L380.8 190.7L381.5 192.5L383.0 194.3L381.8 194.6L380.4 192.8L378.6 191.5L378.2 188.8L376.4 187.9L374.8 186.7L374.4 184.9L373.6 183.3L372.5 181.3L370.7 179.9L370.0 178.3L368.6 177.3L367.6 175.8L365.7 175.7L364.0 174.7L363.0 173.0L361.8 171.3L360.8 169.2L359.5 167.6L358.5 165.8L357.5 164.8L357.8 162.1L357.8 160.2L358.4 158.5L358.3 156.7L358.4 154.9L357.6 153.0L357.0 151.1L358.6 151.7L360.2 151.8L360.6 150.1L359.0 149.0L356.5 147.8L354.4 146.9L352.2 146.3L351.0 144.1L349.4 142.6L347.9 141.0L346.2 138.4L344.4 137.3L342.8 136.0L341.1 135.7L339.7 134.9L338.5 133.6L336.8 133.3L335.1 133.4L333.3 132.2L331.1 131.9L329.2 131.9L327.4 131.2L325.6 131.1L324.0 130.3L322.2 130.5L320.5 130.8L318.8 130.2L317.1 130.2L315.5 130.9L314.0 131.7L312.3 132.1L310.6 132.6L311.9 129.8L313.7 129.0L312.3 129.8L311.0 130.9L309.4 131.2L307.1 132.9L306.5 134.6L304.3 135.4L302.5 136.7L300.6 136.9L299.1 138.1L296.9 138.2L294.8 138.9L292.8 140.1L290.5 140.3L293.1 138.8L294.9 138.1L296.5 137.2L298.3 136.1L299.9 135.0L300.8 133.6L299.1 134.0L297.4 133.4L295.4 133.0L293.4 133.6L292.8 131.2L290.6 130.3L288.3 129.8L287.4 127.8L288.8 125.9L290.8 125.2L293.0 124.9L294.8 123.7L295.1 122.8L292.8 122.7L290.5 123.3L288.4 123.7L286.2 123.3L284.6 122.2L282.6 121.6Z" fill="none" stroke-width="1.3"/>
<path d="M438.0 219.3L440.1 217.9L441.3 215.8L443.5 214.6L446.4 213.8L447.9 212.8L448.8 214.1L447.8 215.8L448.6 218.4L449.4 216.6L450.3 214.8L453.3 215.8L455.2 215.4L457.2 215.8L458.9 216.0L460.6 216.0L463.5 215.7L466.1 217.0L467.5 219.3L469.2 220.2L470.4 221.7L472.6 223.7L474.5 223.7L476.4 223.7L479.0 224.4L481.5 225.9L482.9 226.8L483.7 228.6L484.1 230.6L485.0 233.1L487.5 235.0L489.6 235.6L491.8 235.7L493.4 236.7L494.5 238.3L496.1 239.0L497.9 238.3L499.5 239.0L501.3 239.0L502.9 240.1L504.6 240.3L505.8 241.6L507.3 242.2L508.9 242.6L510.5 244.3L511.0 247.0L510.1 248.5L509.8 250.3L508.8 252.0L507.2 253.2L506.2 254.9L504.6 256.3L504.5 258.4L504.0 260.6L503.9 262.6L503.3 264.5L502.8 266.8L501.6 268.8L501.0 270.3L500.0 271.7L498.4 272.7L496.6 273.4L494.7 274.3L492.7 274.8L491.0 275.5L489.6 276.4L488.4 277.7L488.3 279.9L487.3 282.0L486.1 283.7L485.0 285.4L483.5 286.8L482.4 288.5L481.2 290.5L479.3 291.7L477.6 292.4L476.6 293.8L473.8 293.6L472.2 292.9L470.6 292.4L471.6 293.8L472.6 295.3L472.4 297.4L471.9 299.4L469.9 299.5L468.2 300.5L466.0 300.4L463.9 300.5L463.9 303.4L462.3 303.8L460.6 303.6L459.1 304.4L460.6 306.8L460.0 308.7L458.7 310.2L457.5 311.3L455.9 312.0L455.0 313.5L456.2 315.0L457.9 315.9L456.5 316.8L455.3 317.9L454.5 319.3L453.8 321.1L452.6 322.4L453.4 323.8L451.5 323.9L453.1 324.8L455.5 326.8L457.5 328.0L455.0 328.9L453.3 328.5L451.5 328.6L449.8 327.8L448.1 327.0L446.7 325.4L444.7 324.8L442.8 322.2L442.6 320.3L441.4 318.8L441.2 317.1L441.3 315.4L442.3 314.1L442.6 312.5L443.5 310.8L444.7 309.4L444.2 306.3L444.3 304.0L444.7 301.7L444.8 299.7L444.5 297.7L445.8 296.5L446.4 294.8L447.5 292.8L447.9 290.5L447.7 288.8L447.6 287.1L448.1 285.4L448.8 283.7L448.5 282.0L449.1 279.8L449.7 277.7L449.9 275.7L450.2 273.7L450.2 271.7L450.7 269.6L450.4 267.6L450.2 265.5L448.1 263.6L446.5 262.5L444.7 261.6L443.0 260.5L441.3 259.4L439.6 256.8L438.6 254.7L437.3 252.8L436.5 250.6L435.3 248.6L434.5 247.1L433.6 245.6L431.5 244.3L432.0 242.6L431.5 241.2L433.0 239.8L433.9 238.1L432.0 237.8L433.0 234.9L433.4 232.6L435.3 231.8L436.0 230.1L437.8 227.8L438.4 226.2L438.0 224.6L437.3 222.0L438.0 219.3Z" fill="#d2e6cb" stroke="none"/>
<g clip-path="url(#csa)" stroke-width="1.0">
<path d="M435.3 217.7L447.3 212.6L448.5 213.8L446.8 215.0L445.7 216.2L444.9 218.2L446.6 221.3L450.5 222.0L451.7 223.6L455.0 223.4L454.5 226.3L455.3 230.2L456.0 231.9L454.3 231.1L451.0 231.1L451.4 232.8L450.7 233.0L450.7 234.3L451.4 235.7L450.8 241.2L447.3 238.3L444.5 236.2L441.8 234.2L438.7 233.3L435.6 231.6L433.6 231.4L435.3 222.0Z" fill="#a9d09a"/>
<path d="M448.5 213.8L446.8 215.0L445.7 216.2L444.9 218.2L446.6 221.3L450.5 222.0L451.7 223.6L455.0 223.4L454.5 226.3L455.3 230.2L456.0 231.9L458.4 232.8L460.6 231.4L460.1 227.5L462.7 227.3L463.0 227.1L465.6 226.3L466.8 225.6L466.6 225.1L465.4 223.8L465.9 222.5L467.3 221.7L467.8 219.4L467.8 215.2L448.5 212.6Z" fill="#d2e6cb"/>
<path d="M467.8 219.4L467.3 221.7L465.9 222.5L465.4 223.8L466.6 225.1L466.8 225.6L467.8 226.3L468.3 228.0L467.8 229.7L468.7 231.3L469.9 231.9L472.1 230.9L473.8 230.7L472.4 228.2L471.4 225.8L472.6 223.7L473.0 220.3Z" fill="#f2f6f0"/>
<path d="M472.6 223.7L471.4 225.8L472.4 228.2L473.8 230.7L476.4 230.7L478.1 230.2L477.4 228.0L478.1 224.4L476.4 222.0Z" fill="#d2e6cb"/>
<path d="M478.1 224.4L477.4 228.0L478.1 230.2L480.0 230.2L482.2 226.8L483.2 225.4L478.1 222.9Z" fill="#f2f6f0"/>
<path d="M482.2 226.8L480.0 230.2L478.1 230.2L476.4 230.7L473.8 230.7L472.1 230.9L469.9 231.9L468.7 231.3L467.8 229.7L468.3 228.0L467.8 226.3L466.8 225.6L465.6 226.3L463.0 227.1L462.7 227.3L460.1 227.5L460.6 231.4L458.4 232.8L456.0 231.9L454.3 231.1L451.0 231.1L451.4 232.8L450.7 233.0L450.7 234.3L451.4 235.7L450.8 241.2L445.7 242.7L444.9 245.3L444.0 246.5L445.9 249.4L449.7 250.3L449.8 252.8L451.4 252.7L452.9 252.8L456.5 251.0L458.7 251.1L459.3 254.6L461.8 255.4L464.4 256.8L466.1 257.1L467.1 257.6L467.3 259.9L467.5 261.9L470.6 261.9L470.7 263.6L471.9 264.7L471.0 268.6L471.4 271.7L473.8 271.9L475.2 272.5L475.7 275.1L477.1 275.1L477.1 277.9L478.4 278.0L478.6 278.9L478.4 280.4L475.0 282.0L471.9 285.7L473.3 285.6L475.4 286.8L477.1 288.0L479.1 289.8L479.1 291.7L485.0 295.7L519.2 251.1L493.5 225.4Z" fill="#79a962"/>
<path d="M435.6 231.6L438.7 233.3L441.8 234.2L441.1 236.6L439.4 238.5L436.5 240.0L435.8 241.9L434.4 242.4L433.0 241.2L433.0 239.8L430.1 239.1L430.1 231.4Z" fill="#d2e6cb"/>
<path d="M441.8 234.2L444.5 236.2L447.3 238.3L450.8 241.2L445.7 242.7L444.9 245.3L444.0 246.5L445.9 249.4L449.7 250.3L449.8 252.8L451.4 252.7L452.9 255.6L452.4 258.3L451.7 260.0L452.4 261.8L451.4 263.6L450.0 265.4L447.3 268.3L425.0 251.1L430.1 239.1L433.0 239.8L433.0 241.2L434.4 242.4L435.8 241.9L436.5 240.0L439.4 238.5L441.1 236.6Z" fill="#d2e6cb"/>
<path d="M451.4 252.7L452.9 252.8L456.5 251.0L458.7 251.1L459.3 254.6L461.8 255.4L464.4 256.8L466.1 257.1L467.1 257.6L467.3 259.9L467.5 261.9L470.6 261.9L470.7 263.6L471.9 264.7L471.0 268.6L469.4 267.1L464.9 267.6L463.4 272.0L460.5 273.1L458.1 271.9L455.5 273.1L453.8 270.5L452.7 268.3L452.9 266.5L451.4 263.6L452.4 261.8L451.7 260.0L452.4 258.3L452.9 255.6Z" fill="#d2e6cb"/>
<path d="M471.0 268.6L471.4 271.7L473.8 271.9L475.2 272.5L475.7 275.1L477.1 275.1L477.1 277.9L474.2 281.1L470.2 280.8L471.8 277.5L467.8 275.1L463.9 272.5L463.4 272.0L464.9 267.6L469.4 267.1Z" fill="#d2e6cb"/>
<path d="M471.9 285.7L473.3 285.6L475.4 286.8L477.1 288.0L479.1 289.8L479.1 291.7L479.8 295.7L470.6 292.8L470.9 290.5L471.1 288.8Z" fill="#d2e6cb"/>
<path d="M477.1 277.9L478.4 278.0L478.6 278.9L478.4 280.4L475.0 282.0L471.9 285.7L471.1 288.8L470.9 290.5L470.6 292.8L474.7 297.4L467.8 331.6L453.1 329.9L453.1 324.1L450.7 323.4L447.4 323.1L446.8 321.4L445.2 320.7L444.7 318.5L446.4 316.2L447.3 313.7L447.9 310.7L447.6 307.7L447.8 303.4L449.0 298.2L450.0 294.8L450.7 290.5L450.7 285.4L452.4 281.1L453.6 276.0L455.5 273.1L458.1 271.9L460.5 273.1L463.4 272.0L463.9 272.5L467.8 275.1L471.8 277.5L470.2 280.8L474.2 281.1Z" fill="#a9d09a"/>
<path d="M450.0 265.4L451.4 263.6L452.9 266.5L452.7 268.3L453.8 270.5L455.5 273.1L453.6 276.0L452.4 281.1L450.7 285.4L450.7 290.5L450.0 294.8L449.0 298.2L447.8 303.4L447.6 307.7L447.9 310.7L447.3 313.7L446.4 316.2L444.7 318.5L445.2 320.7L446.8 321.4L447.4 323.1L450.7 323.4L453.1 324.1L453.1 329.9L433.6 329.9L433.6 264.8Z" fill="#a9d09a"/>
</g>
<path d="M438.0 219.3L440.1 217.9L441.3 215.8L443.5 214.6L446.4 213.8L447.9 212.8L448.8 214.1L447.8 215.8L448.6 218.4L449.4 216.6L450.3 214.8L453.3 215.8L455.2 215.4L457.2 215.8L458.9 216.0L460.6 216.0L463.5 215.7L466.1 217.0L467.5 219.3L469.2 220.2L470.4 221.7L472.6 223.7L474.5 223.7L476.4 223.7L479.0 224.4L481.5 225.9L482.9 226.8L483.7 228.6L484.1 230.6L485.0 233.1L487.5 235.0L489.6 235.6L491.8 235.7L493.4 236.7L494.5 238.3L496.1 239.0L497.9 238.3L499.5 239.0L501.3 239.0L502.9 240.1L504.6 240.3L505.8 241.6L507.3 242.2L508.9 242.6L510.5 244.3L511.0 247.0L510.1 248.5L509.8 250.3L508.8 252.0L507.2 253.2L506.2 254.9L504.6 256.3L504.5 258.4L504.0 260.6L503.9 262.6L503.3 264.5L502.8 266.8L501.6 268.8L501.0 270.3L500.0 271.7L498.4 272.7L496.6 273.4L494.7 274.3L492.7 274.8L491.0 275.5L489.6 276.4L488.4 277.7L488.3 279.9L487.3 282.0L486.1 283.7L485.0 285.4L483.5 286.8L482.4 288.5L481.2 290.5L479.3 291.7L477.6 292.4L476.6 293.8L473.8 293.6L472.2 292.9L470.6 292.4L471.6 293.8L472.6 295.3L472.4 297.4L471.9 299.4L469.9 299.5L468.2 300.5L466.0 300.4L463.9 300.5L463.9 303.4L462.3 303.8L460.6 303.6L459.1 304.4L460.6 306.8L460.0 308.7L458.7 310.2L457.5 311.3L455.9 312.0L455.0 313.5L456.2 315.0L457.9 315.9L456.5 316.8L455.3 317.9L454.5 319.3L453.8 321.1L452.6 322.4L453.4 323.8L451.5 323.9L453.1 324.8L455.5 326.8L457.5 328.0L455.0 328.9L453.3 328.5L451.5 328.6L449.8 327.8L448.1 327.0L446.7 325.4L444.7 324.8L442.8 322.2L442.6 320.3L441.4 318.8L441.2 317.1L441.3 315.4L442.3 314.1L442.6 312.5L443.5 310.8L444.7 309.4L444.2 306.3L444.3 304.0L444.7 301.7L444.8 299.7L444.5 297.7L445.8 296.5L446.4 294.8L447.5 292.8L447.9 290.5L447.7 288.8L447.6 287.1L448.1 285.4L448.8 283.7L448.5 282.0L449.1 279.8L449.7 277.7L449.9 275.7L450.2 273.7L450.2 271.7L450.7 269.6L450.4 267.6L450.2 265.5L448.1 263.6L446.5 262.5L444.7 261.6L443.0 260.5L441.3 259.4L439.6 256.8L438.6 254.7L437.3 252.8L436.5 250.6L435.3 248.6L434.5 247.1L433.6 245.6L431.5 244.3L432.0 242.6L431.5 241.2L433.0 239.8L433.9 238.1L432.0 237.8L433.0 234.9L433.4 232.6L435.3 231.8L436.0 230.1L437.8 227.8L438.4 226.2L438.0 224.6L437.3 222.0L438.0 219.3Z" fill="none" stroke-width="1.3"/>
<path d="M560.5 172.7L562.9 173.7L564.9 173.6L566.8 173.9L568.8 173.4L570.6 172.7L572.8 172.3L574.9 171.3L577.0 170.9L579.2 171.0L581.2 170.9L583.3 170.8L585.3 170.8L588.1 170.3L589.6 170.8L588.6 171.8L589.6 173.7L587.9 175.2L589.8 177.0L592.0 177.8L593.6 178.3L595.2 178.6L596.8 178.7L597.5 180.2L599.3 181.2L601.4 181.2L604.2 181.8L605.0 180.2L604.9 178.7L607.4 177.6L610.0 178.2L611.5 179.1L613.3 179.4L616.0 179.9L618.2 180.4L620.3 181.1L622.8 180.0L625.9 180.4L627.6 180.1L629.2 180.4L629.9 181.9L630.4 183.5L629.4 186.0L627.5 185.2L626.4 182.8L626.6 185.0L627.8 186.6L628.7 188.3L629.6 189.9L631.1 191.2L631.6 193.1L632.6 194.7L633.6 196.3L633.9 198.5L634.5 200.6L635.9 201.6L636.7 203.2L637.8 205.3L638.6 207.4L640.2 208.2L641.2 209.7L642.7 210.9L643.9 212.4L644.8 213.6L646.2 214.6L647.0 216.2L649.1 215.8L651.1 214.8L653.3 214.8L655.4 214.5L656.9 213.9L658.5 213.6L658.1 216.2L656.9 218.6L656.6 220.9L655.4 222.9L654.5 224.9L652.8 226.3L652.0 227.8L650.5 228.9L649.4 230.2L648.2 231.5L646.8 232.5L645.1 233.1L644.2 234.5L642.6 235.2L641.7 236.6L640.4 237.7L639.3 239.1L638.0 241.1L637.7 243.4L638.2 245.4L637.9 247.4L638.1 249.3L638.6 251.1L640.0 253.7L639.9 255.7L639.6 257.7L640.1 259.7L639.2 261.5L637.7 262.9L636.2 264.1L634.5 265.1L633.1 266.4L631.9 267.6L630.2 268.1L630.5 270.4L631.4 272.5L631.4 275.1L629.7 275.9L628.2 277.0L627.0 278.4L627.1 280.2L626.8 282.0L625.2 283.0L624.2 284.5L623.3 286.2L622.0 287.6L620.1 288.7L618.6 290.2L617.0 291.4L615.1 291.9L613.5 292.5L611.7 292.4L610.0 292.3L608.3 292.6L606.5 292.9L604.9 293.6L602.1 292.6L601.8 289.7L601.7 287.8L600.9 286.2L600.1 284.5L599.3 282.9L598.3 281.6L596.8 280.6L596.9 278.7L595.7 277.1L596.2 275.1L595.4 273.4L594.2 271.4L593.6 269.1L593.0 267.1L592.1 265.1L590.8 263.5L591.0 261.6L591.3 259.8L591.5 258.0L592.0 256.3L592.9 255.0L594.1 253.7L594.0 251.5L593.2 249.4L592.6 247.8L592.0 246.2L591.7 244.4L590.8 241.7L589.7 240.5L588.3 239.5L587.0 238.3L586.2 236.7L586.0 234.9L586.9 232.8L587.0 230.6L587.4 228.0L585.3 226.3L582.6 226.5L580.0 226.3L578.8 225.0L578.3 223.2L576.6 223.7L574.9 223.2L573.2 223.6L571.5 224.1L569.3 224.9L567.2 225.8L565.0 225.7L562.9 225.1L561.1 225.1L559.5 226.2L557.8 226.5L554.8 225.3L553.3 223.5L551.2 222.4L549.6 221.0L548.0 219.6L546.7 218.3L545.8 216.7L544.0 214.8L541.8 212.8L541.7 210.2L540.6 208.8L542.3 206.6L542.9 204.5L542.8 202.3L542.3 200.1L541.3 198.0L541.9 196.2L542.8 194.6L543.6 192.9L544.9 191.5L545.8 189.3L546.7 187.7L548.2 186.5L550.9 185.7L552.4 185.0L553.5 183.6L554.0 181.6L553.8 180.0L554.6 178.3L556.0 177.0L559.0 175.8L559.9 174.3L560.5 172.7Z" fill="#d2e6cb" stroke="none"/>
<g clip-path="url(#caf)" stroke-width="1.0">
<path d="M566.8 173.9L567.7 175.6L567.7 177.8L565.6 179.0L564.3 179.9L562.0 182.6L559.5 183.3L555.7 184.8L555.7 186.5L555.7 187.2L555.7 189.5L550.0 189.5L550.0 193.7L548.2 194.9L548.3 197.5L541.3 197.5L538.1 192.9L544.9 182.6L556.9 171.5L566.8 170.6Z" fill="#d2e6cb"/>
<path d="M541.3 197.5L548.3 197.5L548.2 194.9L550.0 193.7L550.0 189.5L555.7 189.5L555.7 187.2L562.4 191.2L559.5 191.3L561.5 206.1L561.2 207.4L552.3 208.1L551.1 207.3L549.7 208.8L547.6 206.4L546.6 205.6L544.9 205.6L542.3 206.2L539.8 204.9L539.8 198.0Z" fill="#f2f6f0"/>
<path d="M566.8 173.9L567.7 175.6L567.7 177.8L565.6 179.0L564.3 179.9L562.0 182.6L559.5 183.3L555.7 184.8L555.7 187.2L562.4 191.2L572.7 198.0L576.3 201.5L577.8 201.3L580.5 200.8L591.2 193.7L590.3 192.4L588.1 191.5L586.9 188.6L587.6 186.9L586.9 182.3L584.6 178.3L583.4 176.6L584.6 174.7L584.8 172.3L585.3 170.8L585.3 168.9L566.8 170.6Z" fill="#a9d09a"/>
<path d="M585.3 170.8L584.8 172.3L584.6 174.7L583.4 176.6L584.6 178.3L586.9 182.3L588.1 180.0L590.3 178.5L590.3 177.1L591.2 168.9L585.3 168.9Z" fill="#a9d09a"/>
<path d="M590.3 177.1L590.3 178.5L588.1 180.0L586.9 182.3L587.6 186.9L586.9 188.6L588.1 191.5L590.3 192.4L591.2 193.7L593.9 194.6L594.9 195.3L596.3 194.6L598.0 193.8L611.7 200.6L611.7 199.7L613.4 199.7L613.4 196.3L613.4 184.0L612.9 182.4L613.8 179.9L613.4 175.8L590.3 175.8Z" fill="#d2e6cb"/>
<path d="M613.8 179.9L612.9 182.4L613.4 184.0L613.4 196.3L633.8 196.3L635.7 196.3L634.0 189.5L630.9 183.6L629.4 180.2L628.8 177.5L613.4 177.5Z" fill="#79a962"/>
<path d="M613.4 196.3L633.8 196.3L636.7 203.2L634.0 204.9L633.1 208.3L633.0 209.7L632.4 212.2L630.7 213.8L629.4 215.8L629.0 217.7L627.6 219.6L627.1 220.6L630.0 222.9L631.1 224.6L628.8 226.8L628.0 227.5L623.4 228.0L619.4 226.5L617.5 225.3L613.9 221.2L611.7 219.1L610.9 219.1L609.8 215.3L608.1 212.4L609.0 209.8L609.8 207.4L611.7 207.1L611.7 200.6L611.7 199.7L613.4 199.7Z" fill="#d2e6cb"/>
<path d="M598.0 193.8L611.7 200.6L611.7 207.1L609.8 207.4L609.0 209.8L608.1 212.4L609.8 215.3L607.8 215.8L604.9 218.6L603.0 218.8L597.2 221.2L595.4 217.0L597.3 216.9L596.1 213.1L594.9 212.6L593.9 210.5L593.7 209.3L597.2 205.1L597.5 199.9Z" fill="#f2f6f0"/>
<path d="M591.1 193.7L593.9 194.6L594.9 195.3L596.3 194.6L598.0 193.8L597.5 199.9L597.2 205.1L593.7 209.3L593.9 210.5L592.0 211.6L587.7 211.2L582.6 211.6L577.5 210.9L576.8 214.0L575.4 213.1L574.4 212.2L572.3 211.7L570.9 208.5L576.6 207.8L577.8 205.7L577.8 201.3L580.5 200.8Z" fill="#f2f6f0"/>
<path d="M562.4 191.2L572.7 198.0L576.3 201.5L577.8 201.3L577.8 205.7L576.6 207.8L570.9 208.5L569.4 208.1L567.2 209.0L565.5 210.7L563.2 211.7L561.5 215.2L561.2 216.2L558.6 216.5L557.1 216.4L556.4 215.2L556.0 213.4L554.5 212.9L551.2 212.6L551.1 210.7L549.7 208.8L551.1 207.3L552.3 208.1L561.2 207.4L561.5 206.1L559.5 191.3Z" fill="#e3efde"/>
<path d="M542.3 206.2L544.9 205.6L546.6 205.6L547.6 206.4L549.7 208.8L551.1 210.7L549.9 212.8L547.1 212.2L544.6 212.2L541.8 212.9L538.1 210.0Z" fill="#a9d09a"/>
<path d="M541.8 212.9L544.6 212.2L547.1 212.2L547.1 214.0L544.9 215.5L541.5 215.2Z" fill="#d2e6cb"/>
<path d="M544.9 215.5L547.1 214.0L547.1 212.2L549.9 212.8L551.1 212.8L552.3 213.6L554.5 212.9L556.0 213.4L556.4 215.2L557.1 216.4L556.9 219.4L556.0 221.0L554.5 221.3L553.0 219.4L551.4 216.9L549.4 217.0L547.8 218.6L544.9 218.6Z" fill="#f2f6f0"/>
<path d="M547.8 218.6L549.4 217.0L551.4 216.9L553.0 219.4L552.4 220.3L551.1 222.2L548.3 223.7Z" fill="#f2f6f0"/>
<path d="M551.1 222.2L552.4 220.3L553.0 219.4L554.5 221.3L556.0 221.0L556.2 223.0L557.6 223.9L557.8 226.5L555.2 228.9Z" fill="#f2f6f0"/>
<path d="M557.8 226.5L557.6 223.9L556.2 223.0L556.0 221.0L556.9 219.4L557.1 216.4L558.6 216.5L561.2 216.2L562.5 217.2L565.5 217.0L566.0 218.6L565.1 223.4L565.6 225.4L565.5 228.9Z" fill="#d2e6cb"/>
<path d="M561.2 216.2L561.5 215.2L563.2 211.7L565.5 210.7L567.2 209.0L569.4 208.1L570.9 208.5L572.3 211.7L574.4 212.2L574.7 212.9L572.1 215.2L570.6 215.2L565.8 215.2L565.5 217.0L562.5 217.2Z" fill="#e3efde"/>
<path d="M565.6 225.4L565.1 223.4L566.0 218.6L565.5 217.0L565.8 215.2L570.6 215.2L571.5 216.0L571.3 219.4L571.6 222.4L572.7 223.6L572.3 228.9Z" fill="#d2e6cb"/>
<path d="M572.7 223.6L571.6 222.4L571.3 219.4L571.5 216.0L570.6 215.2L572.1 215.2L573.0 218.1L573.3 223.4Z" fill="#f2f6f0"/>
<path d="M573.3 223.4L573.0 218.1L572.1 215.2L574.7 212.9L576.8 214.0L576.9 216.9L575.2 218.6L575.2 223.2Z" fill="#f2f6f0"/>
<path d="M575.2 223.2L575.2 218.6L576.9 216.9L576.8 214.0L577.5 210.9L582.6 211.6L587.7 211.2L592.0 211.6L593.9 210.5L594.9 212.6L595.6 214.3L593.4 216.5L591.8 219.4L590.8 222.0L588.8 222.0L587.4 223.7L585.7 226.1L579.2 228.9Z" fill="#a9d09a"/>
<path d="M585.7 226.1L587.4 223.7L588.8 222.0L590.8 222.0L591.8 219.4L593.4 216.5L595.6 214.3L594.9 212.6L596.1 213.1L597.3 216.9L595.4 217.0L597.2 221.2L595.4 224.6L596.3 227.1L598.4 230.2L595.4 230.2L590.0 230.2L587.4 230.1L584.3 228.9Z" fill="#d2e6cb"/>
<path d="M597.2 221.2L603.0 218.8L604.9 218.6L607.8 215.8L609.8 215.3L610.9 219.1L611.7 219.1L613.9 221.2L617.5 225.3L614.3 224.9L609.7 225.9L605.7 226.5L602.3 227.8L599.0 228.0L598.4 230.2L596.3 227.1L595.4 224.6Z" fill="#f2f6f0"/>
<path d="M587.4 230.1L590.0 230.2L590.0 232.3L586.9 232.3L584.3 231.4Z" fill="#d2e6cb"/>
<path d="M586.9 232.3L590.0 232.3L590.0 230.2L593.4 230.2L595.4 230.2L594.4 231.6L595.3 234.5L595.1 237.4L592.0 238.1L590.8 240.0L589.6 240.7L584.3 235.7Z" fill="#f2f6f0"/>
<path d="M589.6 240.7L590.8 240.0L592.0 238.1L595.1 237.4L595.3 234.5L594.4 231.6L595.4 230.2L598.4 230.2L599.0 228.0L602.3 227.8L601.1 230.6L600.9 235.7L598.4 237.8L597.8 240.5L595.4 242.2L593.0 241.9L591.5 242.6L589.4 242.6Z" fill="#f2f6f0"/>
<path d="M591.5 244.3L592.5 242.2L595.4 242.2L597.8 240.5L598.4 237.8L600.9 235.7L601.1 230.6L602.3 227.8L605.7 226.5L609.7 225.9L614.3 224.9L617.5 225.3L619.4 226.5L623.4 228.0L622.0 232.3L621.3 236.4L620.4 238.3L620.6 241.7L621.3 244.3L623.4 248.2L620.1 248.6L619.4 252.8L621.3 254.9L617.2 253.9L613.4 253.2L610.0 252.8L608.6 253.2L607.9 246.5L604.9 246.0L600.6 247.7L598.5 244.3L589.4 244.3Z" fill="#d2e6cb"/>
<path d="M591.5 244.3L598.5 244.3L600.6 247.7L604.9 246.0L607.9 246.5L608.6 253.2L611.7 252.8L611.7 256.3L608.3 256.3L608.3 261.8L610.7 264.1L606.4 265.3L602.3 263.8L594.6 263.8L590.8 263.6L587.7 251.1Z" fill="#f2f6f0"/>
<path d="M590.8 263.6L594.6 263.8L602.3 263.8L606.4 265.3L610.7 264.1L613.9 264.5L606.6 264.8L606.6 271.7L604.9 271.7L604.9 276.5L604.9 282.6L603.1 283.5L599.7 282.6L598.9 283.0L591.2 283.7Z" fill="#d2e6cb"/>
<path d="M604.9 271.7L606.6 271.7L606.6 264.8L610.7 264.1L613.9 264.5L615.5 267.4L618.1 269.1L621.0 271.9L616.9 274.4L615.1 276.3L613.4 278.0L609.8 277.5L606.2 279.4L604.9 276.5Z" fill="#d2e6cb"/>
<path d="M598.9 283.0L599.7 282.6L603.1 283.5L604.9 282.6L604.9 276.5L606.2 279.4L609.8 277.5L613.4 278.0L615.1 276.3L616.9 274.4L621.0 271.9L624.2 272.4L625.4 276.0L625.2 278.4L627.0 280.1L630.6 285.4L604.9 299.1L594.6 285.4Z" fill="#79a962"/>
<path d="M616.9 284.5L618.6 283.0L621.0 284.4L619.6 286.1L617.4 285.7Z" fill="#f2f6f0"/>
<path d="M613.9 264.5L616.9 264.7L619.9 261.4L622.7 260.7L627.0 262.6L627.0 266.5L626.3 270.0L624.2 272.4L621.0 271.9L618.1 269.1L615.5 267.4Z" fill="#d2e6cb"/>
<path d="M608.3 256.3L611.7 256.3L611.7 252.8L613.4 253.2L617.2 253.9L621.3 254.9L619.4 252.8L620.1 248.6L623.4 248.2L627.0 250.1L627.6 252.0L627.0 255.4L627.5 258.0L622.7 260.7L619.9 261.4L616.9 264.7L613.9 264.5L610.7 264.1L608.3 261.8Z" fill="#d2e6cb"/>
<path d="M627.0 250.1L629.7 250.3L630.0 253.7L631.9 258.8L631.1 263.3L629.4 260.6L627.5 258.0L627.0 255.4L627.6 252.0Z" fill="#d2e6cb"/>
<path d="M640.0 252.0L634.8 253.9L630.0 253.7L631.9 258.8L631.1 263.3L629.4 260.6L627.5 258.0L622.7 260.7L627.0 262.6L627.0 266.5L626.3 270.0L624.2 272.4L625.4 276.0L625.2 278.4L627.0 280.1L639.1 282.0L647.7 259.7Z" fill="#d2e6cb"/>
<path d="M637.7 242.1L635.2 239.5L628.7 235.7L622.8 235.7L623.4 237.9L622.0 241.4L620.6 241.7L621.3 244.3L623.4 248.2L627.0 250.1L629.7 250.3L630.0 253.7L634.8 253.9L640.0 252.0L644.3 244.3Z" fill="#d2e6cb"/>
<path d="M621.3 236.4L622.8 235.7L623.4 237.9L622.0 241.4L620.6 241.7L620.4 238.3Z" fill="#a9d09a"/>
<path d="M622.0 232.3L621.3 236.4L622.8 235.7L628.7 235.7L628.8 232.3L630.4 227.8L628.0 227.5L623.4 228.0Z" fill="#d2e6cb"/>
<path d="M628.7 235.7L635.2 239.5L637.7 242.1L644.3 239.1L641.9 236.9L640.8 229.2L642.4 227.1L640.3 226.8L638.3 228.2L632.1 226.1L628.8 226.8L630.4 227.8L628.8 232.3Z" fill="#a9d09a"/>
<path d="M633.0 209.7L634.8 209.5L636.6 209.2L639.1 209.2L641.7 210.9L643.2 212.6L642.2 215.2L643.9 215.2L646.0 218.6L652.8 220.3L647.7 225.4L645.1 225.8L642.4 227.1L640.3 226.8L638.3 228.2L632.1 226.1L628.8 226.8L631.1 224.6L630.0 222.9L627.1 220.6L627.6 219.6L629.0 217.7L629.4 215.8L630.7 213.8L632.4 212.2Z" fill="#d2e6cb"/>
<path d="M633.0 209.7L633.1 208.3L634.0 204.9L636.7 203.2L639.1 203.2L644.4 212.2L643.2 212.6L641.7 210.9L639.1 209.2L636.6 209.2L634.8 209.5Z" fill="#d2e6cb"/>
<path d="M643.2 212.6L644.4 212.2L646.0 213.4L643.9 215.2L642.2 215.2Z" fill="#f2f6f0"/>
<path d="M643.9 215.2L646.0 213.4L659.7 212.6L659.7 220.3L644.3 239.1L641.9 236.9L640.8 229.2L642.4 227.1L645.1 225.8L647.7 225.4L652.8 220.3L646.0 218.6Z" fill="#f2f6f0"/>
</g>
<path d="M560.5 172.7L562.9 173.7L564.9 173.6L566.8 173.9L568.8 173.4L570.6 172.7L572.8 172.3L574.9 171.3L577.0 170.9L579.2 171.0L581.2 170.9L583.3 170.8L585.3 170.8L588.1 170.3L589.6 170.8L588.6 171.8L589.6 173.7L587.9 175.2L589.8 177.0L592.0 177.8L593.6 178.3L595.2 178.6L596.8 178.7L597.5 180.2L599.3 181.2L601.4 181.2L604.2 181.8L605.0 180.2L604.9 178.7L607.4 177.6L610.0 178.2L611.5 179.1L613.3 179.4L616.0 179.9L618.2 180.4L620.3 181.1L622.8 180.0L625.9 180.4L627.6 180.1L629.2 180.4L629.9 181.9L630.4 183.5L629.4 186.0L627.5 185.2L626.4 182.8L626.6 185.0L627.8 186.6L628.7 188.3L629.6 189.9L631.1 191.2L631.6 193.1L632.6 194.7L633.6 196.3L633.9 198.5L634.5 200.6L635.9 201.6L636.7 203.2L637.8 205.3L638.6 207.4L640.2 208.2L641.2 209.7L642.7 210.9L643.9 212.4L644.8 213.6L646.2 214.6L647.0 216.2L649.1 215.8L651.1 214.8L653.3 214.8L655.4 214.5L656.9 213.9L658.5 213.6L658.1 216.2L656.9 218.6L656.6 220.9L655.4 222.9L654.5 224.9L652.8 226.3L652.0 227.8L650.5 228.9L649.4 230.2L648.2 231.5L646.8 232.5L645.1 233.1L644.2 234.5L642.6 235.2L641.7 236.6L640.4 237.7L639.3 239.1L638.0 241.1L637.7 243.4L638.2 245.4L637.9 247.4L638.1 249.3L638.6 251.1L640.0 253.7L639.9 255.7L639.6 257.7L640.1 259.7L639.2 261.5L637.7 262.9L636.2 264.1L634.5 265.1L633.1 266.4L631.9 267.6L630.2 268.1L630.5 270.4L631.4 272.5L631.4 275.1L629.7 275.9L628.2 277.0L627.0 278.4L627.1 280.2L626.8 282.0L625.2 283.0L624.2 284.5L623.3 286.2L622.0 287.6L620.1 288.7L618.6 290.2L617.0 291.4L615.1 291.9L613.5 292.5L611.7 292.4L610.0 292.3L608.3 292.6L606.5 292.9L604.9 293.6L602.1 292.6L601.8 289.7L601.7 287.8L600.9 286.2L600.1 284.5L599.3 282.9L598.3 281.6L596.8 280.6L596.9 278.7L595.7 277.1L596.2 275.1L595.4 273.4L594.2 271.4L593.6 269.1L593.0 267.1L592.1 265.1L590.8 263.5L591.0 261.6L591.3 259.8L591.5 258.0L592.0 256.3L592.9 255.0L594.1 253.7L594.0 251.5L593.2 249.4L592.6 247.8L592.0 246.2L591.7 244.4L590.8 241.7L589.7 240.5L588.3 239.5L587.0 238.3L586.2 236.7L586.0 234.9L586.9 232.8L587.0 230.6L587.4 228.0L585.3 226.3L582.6 226.5L580.0 226.3L578.8 225.0L578.3 223.2L576.6 223.7L574.9 223.2L573.2 223.6L571.5 224.1L569.3 224.9L567.2 225.8L565.0 225.7L562.9 225.1L561.1 225.1L559.5 226.2L557.8 226.5L554.8 225.3L553.3 223.5L551.2 222.4L549.6 221.0L548.0 219.6L546.7 218.3L545.8 216.7L544.0 214.8L541.8 212.8L541.7 210.2L540.6 208.8L542.3 206.6L542.9 204.5L542.8 202.3L542.3 200.1L541.3 198.0L541.9 196.2L542.8 194.6L543.6 192.9L544.9 191.5L545.8 189.3L546.7 187.7L548.2 186.5L550.9 185.7L552.4 185.0L553.5 183.6L554.0 181.6L553.8 180.0L554.6 178.3L556.0 177.0L559.0 175.8L559.9 174.3L560.5 172.7Z" fill="none" stroke-width="1.3"/>
<path d="M561.0 172.3L559.5 170.8L557.9 170.3L555.4 170.6L555.5 168.0L554.3 167.5L555.4 165.1L555.5 162.2L554.7 160.3L556.9 159.1L558.8 159.7L560.7 159.3L562.6 159.3L564.6 159.5L567.5 159.7L568.4 157.8L568.5 155.5L566.8 153.5L564.6 152.3L562.5 151.3L565.1 150.4L567.9 150.6L568.2 148.9L570.9 149.2L573.2 148.0L574.9 146.5L576.8 146.0L578.5 144.1L580.0 142.5L582.6 142.2L585.0 142.2L585.3 139.8L584.5 137.2L585.3 136.2L587.1 135.8L588.8 135.2L588.4 137.2L589.1 138.9L587.7 140.1L589.4 141.5L592.0 140.8L594.9 141.7L596.8 140.7L598.9 140.6L600.7 140.9L602.3 140.1L604.2 140.8L606.9 139.4L606.7 137.2L607.6 135.7L609.3 135.2L611.5 136.2L612.4 134.3L610.9 132.9L613.4 132.1L615.1 132.4L616.9 132.3L618.6 132.1L620.4 131.6L622.3 131.4L619.4 130.4L617.7 130.3L616.0 130.5L614.0 130.7L611.9 130.6L610.0 131.4L608.4 130.9L607.1 129.8L607.4 126.9L609.1 124.7L611.1 124.3L612.6 123.0L614.1 122.0L612.2 121.3L610.2 120.9L608.3 121.5L606.9 123.0L605.6 124.3L604.0 125.2L602.5 126.5L600.7 127.3L600.2 129.5L602.8 131.4L601.8 132.4L600.5 133.9L598.9 134.8L598.9 137.2L597.7 137.9L595.4 138.1L592.9 139.1L592.4 137.6L590.6 135.0L589.4 132.9L588.6 132.1L587.2 132.9L585.8 133.8L584.3 134.5L581.7 134.5L580.2 133.3L579.2 130.4L579.2 127.8L581.0 127.2L582.6 126.1L584.6 125.0L586.9 124.7L588.3 123.3L590.3 122.7L591.2 121.0L592.9 120.1L594.4 119.4L595.4 118.0L598.0 116.5L599.7 115.6L601.4 114.8L603.5 113.9L605.7 113.7L607.4 113.3L609.0 112.6L610.9 112.7L613.0 112.7L615.1 112.2L617.2 112.8L619.4 112.5L621.5 113.3L623.7 113.6L625.4 114.3L627.1 115.1L628.9 114.8L630.6 115.1L632.3 115.6L634.4 116.0L636.2 117.2L638.3 117.5L640.8 118.4L639.1 120.4L637.4 120.8L635.7 120.9L634.0 120.5L632.3 120.9L630.6 120.6L628.0 120.1L629.5 121.0L630.2 122.7L633.1 123.7L635.7 124.4L637.8 123.7L640.0 123.5L639.1 121.3L641.1 120.9L642.9 120.1L644.6 119.7L646.3 120.1L645.6 118.4L646.0 116.7L647.6 117.4L649.4 117.5L651.1 117.7L652.8 118.2L654.5 117.8L656.2 117.5L658.3 117.8L660.2 117.1L662.2 117.0L664.0 116.9L665.7 116.7L667.4 116.9L669.1 116.5L670.8 116.9L672.5 116.7L674.1 115.8L675.1 114.4L677.1 114.2L679.1 115.0L681.1 114.8L683.1 115.9L685.4 116.1L687.6 117.2L688.8 115.8L687.5 114.8L686.2 113.7L685.4 112.0L687.1 110.5L688.8 109.0L690.5 109.0L692.2 109.3L693.7 110.1L695.3 110.3L694.6 112.4L695.2 114.2L695.5 116.1L698.2 116.3L698.2 113.2L696.5 111.0L699.1 109.8L701.6 110.7L703.4 111.5L704.2 110.2L706.3 109.9L708.5 109.8L709.4 108.1L711.2 107.7L713.1 108.0L715.0 108.2L716.9 107.0L718.8 107.4L717.9 106.4L719.6 105.5L721.4 105.6L723.1 104.9L724.8 104.7L726.5 104.5L728.2 104.5L729.9 104.3L731.6 104.1L733.3 103.8L735.0 103.5L736.7 103.2L738.5 103.1L740.2 103.0L741.8 102.0L743.5 101.8L745.3 101.9L747.0 101.2L748.8 101.1L750.5 101.1L752.3 101.3L753.9 102.1L755.6 101.9L757.3 103.0L759.1 102.4L760.7 102.8L762.8 103.7L765.0 104.0L764.5 105.6L765.0 107.2L762.9 107.5L760.7 107.9L762.9 107.7L765.0 108.4L766.7 107.9L768.4 107.9L770.2 108.3L771.9 107.9L773.6 108.1L775.5 108.3L777.4 108.5L779.4 108.6L781.3 109.0L783.3 108.8L785.4 108.8L787.3 108.1L789.0 108.6L790.7 109.3L792.0 110.4L792.4 112.0L794.1 112.7L795.9 112.5L798.4 111.5L800.1 112.0L801.9 111.6L803.6 111.5L805.4 111.3L807.0 110.6L808.7 110.0L810.5 110.0L812.1 109.5L813.9 109.5L815.6 109.7L817.3 109.4L819.0 110.0L820.7 110.2L822.5 110.0L824.2 110.5L825.9 110.8L827.5 111.5L829.7 112.1L831.8 112.5L833.8 112.7L835.7 112.5L837.6 112.3L839.5 112.4L841.1 113.3L843.1 113.0L844.7 114.1L846.4 114.8L848.1 114.8L849.8 114.9L851.5 115.1L853.2 114.8L855.4 114.7L857.5 114.4L859.7 114.1L861.8 114.1L863.9 114.6L866.1 114.3L868.1 114.2L870.1 114.1L872.1 114.4L873.8 114.8L875.5 115.4L877.2 115.4L878.9 115.8L879.4 117.5L879.0 119.2L879.3 120.9L878.9 122.7L876.4 123.3L875.2 125.0L874.7 126.9L872.7 127.4L870.8 128.2L868.7 128.1L866.9 128.8L865.4 130.0L863.5 130.4L861.4 130.6L859.2 130.4L857.1 130.9L855.0 131.2L852.9 131.6L851.7 133.4L849.8 134.6L848.6 136.4L847.8 139.3L846.1 140.3L844.7 141.5L842.1 143.4L840.7 145.2L839.0 146.6L838.5 144.9L837.8 143.2L837.0 141.2L837.0 138.9L836.9 137.2L837.5 135.5L839.5 135.5L841.3 134.6L842.9 133.4L844.7 132.2L846.3 131.1L848.1 130.4L849.7 129.0L850.7 127.3L848.7 128.4L846.4 128.7L843.8 128.7L842.1 128.6L840.4 128.2L838.7 128.7L837.0 129.6L835.8 131.0L834.7 132.6L832.4 133.1L830.1 132.8L828.0 132.6L825.8 132.2L823.8 132.5L821.9 132.9L819.8 132.4L818.2 133.0L816.4 132.6L814.7 132.9L813.2 134.3L811.3 135.0L809.7 136.3L807.9 137.2L806.4 138.1L805.8 139.7L804.4 140.6L806.5 141.5L808.7 141.5L811.3 143.2L812.6 144.9L812.1 146.7L811.3 148.3L811.1 150.9L809.4 152.3L807.9 153.8L806.3 154.7L805.3 156.1L804.2 157.5L802.7 158.6L801.3 160.0L799.3 160.5L796.7 160.0L795.0 161.0L794.3 161.5L792.6 161.4L789.9 162.1L788.0 162.4L786.4 163.6L784.7 164.6L783.2 165.7L782.2 165.8L779.6 166.9L778.2 167.5L778.7 165.8L780.1 164.6L777.9 163.9L775.3 165.7L772.7 166.9L772.2 168.4L774.1 169.8L775.3 170.4L777.5 169.2L780.4 170.3L779.0 171.6L777.0 172.2L774.8 174.0L776.7 175.2L777.7 178.2L779.4 179.9L777.9 181.6L779.6 183.0L778.9 184.4L778.6 186.0L777.4 187.7L775.8 188.8L774.4 190.1L773.6 191.9L771.0 193.7L768.5 194.9L766.2 195.8L764.2 196.3L761.6 197.0L759.9 198.0L759.0 199.2L758.3 197.2L756.5 197.0L753.9 198.0L753.0 199.2L751.8 201.5L753.0 203.2L754.1 204.7L755.3 206.1L757.1 208.0L757.0 209.9L757.8 211.7L757.7 214.1L755.6 215.5L753.5 216.4L752.2 217.7L750.1 219.3L750.3 217.0L749.6 216.0L747.9 215.8L746.4 213.4L744.1 212.2L743.4 210.9L742.1 211.0L741.9 212.8L741.5 214.7L740.5 216.4L740.7 218.2L742.4 219.8L742.8 221.7L744.1 222.2L745.7 223.4L747.7 225.8L747.7 228.2L748.2 229.7L749.1 231.6L747.9 231.8L746.2 230.6L744.1 229.2L742.9 227.1L742.6 224.6L742.2 222.9L741.4 222.2L739.3 220.0L739.0 217.7L739.7 215.3L739.3 212.6L738.8 210.5L738.3 208.7L738.0 206.8L737.4 205.6L735.9 205.7L734.0 206.9L732.1 206.6L731.7 204.5L732.1 202.3L730.8 200.6L729.6 198.9L728.5 197.7L727.9 195.3L726.5 195.5L725.3 196.5L723.1 196.7L721.3 196.3L719.5 197.5L718.8 199.9L715.9 201.1L714.4 202.1L713.3 203.5L711.4 205.6L709.7 206.5L708.2 207.4L707.7 209.1L707.8 210.9L707.8 212.7L707.7 214.5L707.5 216.4L706.3 216.4L704.6 218.8L703.4 220.1L701.8 218.8L700.8 216.0L699.9 213.8L699.2 212.1L698.4 210.4L697.4 207.8L697.0 205.8L696.2 204.0L695.3 201.1L695.5 199.4L695.1 197.7L694.8 196.0L693.6 197.1L692.6 198.4L691.4 198.4L690.3 196.9L689.0 195.8L690.7 194.8L688.3 194.1L686.1 192.9L684.7 190.5L682.9 190.8L681.1 190.8L679.4 191.1L677.8 190.3L676.1 190.8L674.3 190.9L672.5 190.5L670.7 189.8L668.8 189.8L668.1 187.7L666.5 187.6L664.1 188.6L662.2 188.1L660.3 187.5L658.6 186.2L657.7 184.6L656.6 183.1L654.4 182.1L652.8 182.8L653.5 185.2L655.1 187.4L656.6 188.9L657.6 191.2L658.5 189.3L659.0 190.7L659.0 192.4L661.2 192.7L664.0 192.4L666.4 190.3L667.0 188.9L667.2 191.3L668.9 193.1L671.3 193.7L673.0 195.6L671.5 197.5L670.3 199.1L669.4 201.5L667.6 202.7L665.3 203.9L663.6 204.9L662.3 206.0L660.5 206.2L658.5 208.0L656.9 208.4L655.4 209.0L652.8 210.0L650.3 211.0L647.7 212.1L645.1 212.2L644.6 211.2L643.9 208.3L643.6 205.7L642.0 203.5L641.7 201.9L640.7 200.6L639.7 199.3L638.4 198.2L637.6 195.8L636.6 193.4L634.8 192.4L634.0 190.1L632.6 188.4L630.7 185.9L630.4 183.5L629.5 181.9L629.7 180.0L630.6 177.8L631.4 175.8L632.1 173.4L632.6 171.3L631.9 171.0L629.9 171.0L628.1 171.7L626.3 172.2L624.7 171.4L623.0 171.1L620.3 171.3L617.7 170.6L617.2 168.9L616.2 167.2L615.3 165.5L615.7 164.5L613.4 163.9L611.5 164.3L609.7 164.6L609.3 165.5L610.5 166.9L609.8 168.0L611.7 168.7L610.0 169.1L609.7 171.5L607.8 171.0L606.9 169.4L606.7 168.4L605.7 166.7L604.7 165.8L603.8 164.6L604.0 162.4L602.3 161.4L600.4 160.3L598.0 159.5L596.3 158.3L595.6 156.6L593.9 155.7L591.7 156.2L591.8 158.1L593.7 159.3L594.6 161.0L596.5 162.1L598.0 162.2L598.0 163.1L600.6 164.1L602.3 165.1L601.9 165.8L599.7 164.6L599.0 166.2L600.1 167.2L598.7 168.0L597.5 168.9L597.7 167.4L597.3 165.3L596.0 164.5L594.6 164.1L592.9 163.4L590.8 161.7L589.6 161.2L588.6 160.3L588.2 159.0L586.4 158.1L584.3 158.8L582.2 159.8L580.0 160.0L577.8 159.5L575.9 160.5L576.1 162.1L574.0 163.4L572.1 163.9L570.6 165.7L570.1 167.4L570.6 167.9L569.4 169.6L567.2 171.0L564.6 171.1L562.7 171.5L561.0 172.3Z" fill="#79a962" stroke="none"/>
<g clip-path="url(#ceu)" stroke-width="1.0">
<path d="M554.3 161.7L556.6 161.9L559.5 162.6L558.8 163.8L558.6 166.0L557.8 166.5L558.6 168.6L557.9 170.3L553.5 171.5Z" fill="#79a962"/>
<path d="M554.3 158.6L567.5 159.7L569.7 160.7L573.2 161.0L576.1 161.4L577.5 165.5L567.2 173.2L561.0 172.3L557.9 170.3L558.6 168.6L557.8 166.5L558.6 166.0L558.8 163.8L559.5 162.6L556.6 161.9L554.3 161.7Z" fill="#5c8b44"/>
<path d="M567.5 159.7L562.0 150.1L573.2 146.6L574.9 146.5L577.8 148.5L580.5 149.2L581.6 149.2L584.6 150.1L583.6 152.5L582.4 153.0L580.9 154.9L582.6 155.4L581.9 156.7L582.6 158.3L583.4 159.0L580.9 162.1L576.1 161.4L573.2 161.0L569.7 160.7Z" fill="#5c8b44"/>
<path d="M574.9 146.5L576.6 146.0L577.8 146.0L579.2 145.8L580.7 147.0L581.0 148.2L580.5 149.2L577.8 148.5Z" fill="#79a962"/>
<path d="M576.6 146.0L578.3 142.4L582.9 142.7L582.6 144.6L580.9 145.3L580.7 147.0L579.2 145.8L577.8 146.0Z" fill="#79a962"/>
<path d="M580.7 147.0L580.9 145.3L582.6 144.6L582.9 142.7L583.4 140.6L585.3 140.0L587.6 140.1L589.4 140.6L594.9 141.7L595.3 142.9L595.6 143.9L595.8 146.6L591.3 147.8L594.2 150.4L592.9 152.6L588.6 152.6L586.9 152.5L583.6 152.5L584.6 150.1L581.6 149.2L581.0 148.2Z" fill="#4b6c32"/>
<path d="M585.3 140.0L587.6 140.1L591.2 140.6L592.9 138.1L589.4 134.6L584.3 135.5L583.4 139.8Z" fill="#79a962"/>
<path d="M580.9 154.9L582.4 153.0L583.6 152.5L586.9 152.5L588.6 153.7L588.1 154.9L585.0 155.2L582.6 155.4Z" fill="#79a962"/>
<path d="M582.6 158.3L581.9 156.7L582.6 155.4L585.0 155.2L588.1 154.9L588.6 153.7L591.5 153.3L594.1 154.3L594.2 155.9L594.6 156.9L603.1 164.6L598.0 170.6L583.4 159.0Z" fill="#5c8b44"/>
<path d="M586.9 152.5L588.6 152.6L592.9 152.6L594.2 150.4L596.3 150.1L599.5 150.7L599.9 151.8L598.9 153.5L598.2 154.0L594.1 154.3L591.5 153.3L588.6 153.7Z" fill="#79a962"/>
<path d="M591.3 147.8L595.8 146.6L598.9 147.5L602.8 148.5L602.8 149.2L599.7 150.6L599.5 150.7L596.3 150.1L594.2 150.4Z" fill="#79a962"/>
<path d="M594.9 141.7L601.4 138.9L609.7 140.8L610.9 141.7L611.4 143.7L610.3 144.9L611.7 147.0L609.3 149.9L604.0 149.2L602.8 149.2L602.8 148.5L598.9 147.5L595.8 146.6L595.6 143.9L595.3 142.9Z" fill="#79a962"/>
<path d="M599.9 151.8L599.5 150.7L599.7 150.6L602.8 149.2L604.0 149.2L609.3 149.9L608.5 151.1L605.7 151.4L602.8 152.1Z" fill="#a9d09a"/>
<path d="M598.2 154.0L598.9 153.5L599.9 151.8L602.8 152.1L605.7 151.4L608.5 151.1L609.8 151.9L606.6 154.9L605.2 155.0L602.8 155.4L600.2 155.4Z" fill="#a9d09a"/>
<path d="M594.1 154.3L598.2 154.0L598.9 154.5L597.3 155.5L596.6 156.1L593.9 156.1L594.2 155.9Z" fill="#79a962"/>
<path d="M593.9 156.1L596.6 156.1L597.3 155.5L598.9 154.5L598.2 154.0L600.2 155.4L602.8 155.4L603.1 156.6L598.9 156.6L597.7 157.8L598.4 159.7L600.7 160.5L602.3 161.4L594.6 158.6Z" fill="#a9d09a"/>
<path d="M597.7 157.8L598.9 156.6L603.1 156.6L604.2 158.6L602.6 160.2L600.7 160.5L598.4 159.7Z" fill="#d2e6cb"/>
<path d="M603.1 156.6L602.8 155.4L605.2 155.0L607.3 156.6L609.1 157.4L609.5 158.3L610.0 159.5L609.0 161.5L607.4 161.7L605.4 160.7L603.5 159.5L604.2 158.6Z" fill="#d2e6cb"/>
<path d="M602.3 161.4L602.6 160.2L603.5 159.5L605.4 160.7L604.2 161.7L603.8 162.2L601.4 162.1Z" fill="#d2e6cb"/>
<path d="M603.8 162.2L604.2 161.7L605.7 161.7L606.2 163.9L606.6 165.5L605.2 166.2L601.4 165.5Z" fill="#f2f6f0"/>
<path d="M605.7 161.7L607.4 161.7L609.0 161.5L610.0 163.3L608.3 163.6L606.2 163.9Z" fill="#d2e6cb"/>
<path d="M605.2 166.2L606.6 165.5L606.2 163.9L608.3 163.6L610.0 163.3L615.7 162.6L615.3 164.5L618.6 174.0L603.1 172.3Z" fill="#a9d09a"/>
<path d="M609.0 161.5L610.0 159.5L609.5 158.3L613.4 159.1L616.9 158.5L619.6 159.1L622.0 160.3L618.6 162.1L615.7 162.6L610.0 163.3Z" fill="#a9d09a"/>
<path d="M606.6 154.9L609.8 151.9L613.3 152.3L616.2 151.4L618.9 154.3L618.9 156.1L621.5 156.6L622.0 158.6L619.6 159.1L616.9 158.5L613.4 159.1L609.5 158.3L609.1 157.4L607.3 156.6L605.2 155.0Z" fill="#a9d09a"/>
<path d="M616.2 151.4L617.7 150.9L620.6 151.9L622.0 154.3L618.9 156.1L618.9 154.3Z" fill="#d2e6cb"/>
<path d="M609.3 149.9L611.7 147.0L611.4 145.6L614.3 145.1L622.8 145.8L625.4 144.6L629.0 144.6L631.1 146.6L636.0 148.3L639.1 149.2L639.1 151.8L636.2 153.3L634.8 153.8L632.3 158.6L622.0 156.9L621.5 156.6L618.9 156.1L622.0 154.3L620.6 151.9L617.7 150.9L616.2 151.4L613.3 152.3L609.8 151.9L608.5 151.1Z" fill="#a9d09a"/>
<path d="M610.9 141.7L614.8 141.0L616.2 138.6L618.9 137.9L623.5 138.8L625.1 141.5L626.3 142.7L624.6 144.2L622.8 145.8L614.3 145.1L611.4 145.6L610.3 144.9L611.4 143.7Z" fill="#d2e6cb"/>
<path d="M606.6 137.9L608.3 137.4L612.6 137.6L616.2 138.6L614.8 141.0L610.9 141.7L609.7 140.8L607.1 139.4L604.9 139.8Z" fill="#d2e6cb"/>
<path d="M606.6 137.9L604.9 135.5L612.2 134.8L613.9 134.6L617.4 135.3L618.9 137.9L616.2 138.6L612.6 137.6L608.3 137.4Z" fill="#a9d09a"/>
<path d="M610.0 132.1L618.6 132.1L617.5 134.0L617.4 135.3L613.9 134.6L612.2 134.8L607.4 134.6Z" fill="#d2e6cb"/>
<path d="M606.6 131.2L618.2 130.4L621.1 128.7L624.6 126.3L621.8 124.7L622.0 121.8L620.8 120.1L622.0 118.0L619.9 116.0L619.2 114.4L616.0 114.3L613.4 116.3L606.6 115.8L605.9 115.6L610.9 117.9L611.2 120.9L612.2 121.3L604.9 126.1Z" fill="#79a962"/>
<path d="M589.4 132.9L591.2 131.4L592.0 129.5L591.5 126.9L594.4 123.5L596.3 120.9L598.9 118.2L601.4 116.7L605.9 115.6L610.9 117.9L611.2 120.9L612.2 121.3L603.1 139.8L590.3 138.1Z" fill="#79a962"/>
<path d="M589.4 132.9L591.2 131.4L592.0 129.5L591.5 126.9L594.4 123.5L596.3 120.9L598.9 118.2L601.4 116.7L605.9 115.6L606.6 115.8L613.4 116.3L616.0 114.3L619.2 114.4L619.9 116.0L623.4 114.4L623.9 113.2L604.9 110.7L575.7 127.8L579.2 135.5L588.6 133.8Z" fill="#79a962"/>
<path d="M615.7 162.6L618.6 162.1L622.0 162.9L642.5 162.1L641.7 162.9L644.9 163.6L647.3 166.0L646.7 168.4L647.3 170.3L643.2 170.4L639.1 171.0L635.7 171.0L633.3 172.0L632.1 172.5L630.6 175.8L615.1 174.0L615.3 164.5Z" fill="#79a962"/>
<path d="M639.1 159.7L643.4 160.0L646.0 161.0L650.1 162.2L647.7 163.3L644.9 163.6L641.7 162.9L637.4 162.1Z" fill="#d2e6cb"/>
<path d="M644.9 163.6L647.7 163.3L650.3 167.4L647.3 166.0Z" fill="#d2e6cb"/>
<path d="M647.7 163.3L650.1 162.2L653.7 162.4L656.2 163.8L655.4 165.1L654.5 168.0L652.8 167.4L650.3 167.4Z" fill="#d2e6cb"/>
<path d="M647.3 166.0L650.3 167.4L652.8 167.4L654.5 168.0L654.5 169.6L658.8 171.0L662.9 169.9L664.5 169.9L668.9 168.9L672.5 169.8L675.4 171.3L675.1 174.9L674.2 177.5L674.8 180.0L676.3 180.2L674.9 183.0L678.2 186.0L678.9 187.4L676.1 190.8L664.8 192.9L654.4 182.1L652.8 181.8L652.3 180.0L649.4 177.5L648.5 175.8L649.4 173.9L647.7 172.7L647.3 170.3L646.7 168.4Z" fill="#79a962"/>
<path d="M643.2 170.4L647.3 170.3L647.7 172.7L649.4 173.9L648.5 175.8L649.4 177.5L652.3 180.0L652.8 181.8L652.8 182.8L652.3 183.6L650.3 184.2L647.2 184.0L642.5 180.7L637.4 179.2L637.1 176.8L640.8 174.9L641.2 171.5Z" fill="#a9d09a"/>
<path d="M632.1 172.5L633.3 172.0L635.7 171.0L639.1 171.0L643.2 170.4L641.2 171.5L640.8 174.9L637.1 176.8L632.3 177.5L633.3 175.4L632.3 174.7L630.6 174.0Z" fill="#a9d09a"/>
<path d="M630.6 183.5L631.4 180.0L631.6 178.0L637.1 176.8L637.4 179.2L634.0 180.0L635.7 181.8L633.1 183.5Z" fill="#a9d09a"/>
<path d="M629.2 180.4L630.6 183.5L631.4 180.0L631.6 178.0L631.9 177.0L630.6 177.3L628.8 177.5Z" fill="#79a962"/>
<path d="M630.6 177.3L631.9 177.0L632.3 177.5L633.3 175.4L632.3 174.7L630.6 174.9Z" fill="#d2e6cb"/>
<path d="M633.1 183.5L635.7 181.8L634.0 180.0L637.4 179.2L642.5 180.7L647.2 184.0L650.3 184.2L652.3 185.2L653.5 185.2L656.2 187.7L658.0 191.9L659.7 194.9L665.2 195.1L666.0 196.3L664.8 199.7L659.7 201.5L654.5 202.3L652.8 203.2L650.8 204.5L646.0 204.2L644.6 205.6L643.9 205.9L635.7 196.3L630.6 186.0Z" fill="#79a962"/>
<path d="M650.3 184.2L652.3 183.6L652.8 182.8L653.7 183.5L653.5 185.2L652.3 185.2Z" fill="#a9d09a"/>
<path d="M658.8 192.4L665.2 195.1L666.5 192.9L667.2 191.3L667.4 188.6L663.1 191.2L658.8 191.2Z" fill="#a9d09a"/>
<path d="M665.2 195.1L666.5 192.9L667.2 191.3L668.2 187.7L676.8 194.6L666.5 208.3L660.0 205.6L661.6 205.4L664.8 199.7L666.0 196.3Z" fill="#d2e6cb"/>
<path d="M643.9 205.9L644.6 205.6L646.0 204.2L650.8 204.5L652.8 203.2L654.5 202.3L659.7 201.5L661.6 205.4L660.0 205.6L659.7 211.7L644.3 213.4Z" fill="#d2e6cb"/>
<path d="M662.9 169.9L663.1 164.1L661.4 162.1L661.2 162.2L665.7 163.3L668.2 163.3L670.8 161.2L673.4 162.1L675.9 163.8L677.7 165.8L681.1 167.4L684.5 169.2L684.5 169.9L681.6 170.4L677.7 173.5L675.4 171.3L672.5 169.8L668.9 168.9L664.5 169.9Z" fill="#f2f6f0"/>
<path d="M666.5 156.9L666.5 163.3L668.2 163.3L670.8 161.2L673.4 162.1L675.9 163.8L677.7 165.8L681.1 167.4L684.5 169.2L686.7 170.3L687.8 168.6L686.1 166.3L687.9 166.2L691.4 164.6L692.2 163.4L691.2 162.1L688.1 164.3L683.7 160.5L681.9 159.1L676.8 159.5L670.8 156.1Z" fill="#d2e6cb"/>
<path d="M686.7 170.3L689.7 169.8L693.1 170.8L698.9 170.3L696.5 166.3L691.4 166.2L691.4 164.6L687.9 166.2L686.1 166.3L687.8 168.6Z" fill="#d2e6cb"/>
<path d="M691.4 164.6L691.4 166.2L696.5 166.3L699.9 164.5L703.4 163.8L708.0 162.1L705.1 160.5L697.7 160.0L692.2 161.5L692.2 163.4Z" fill="#d2e6cb"/>
<path d="M654.5 154.5L650.3 151.1L652.0 147.5L657.6 145.4L666.0 147.3L670.8 146.6L675.9 147.0L673.6 144.9L675.1 142.4L675.8 141.3L682.3 141.0L688.8 139.3L696.3 142.4L701.6 141.5L702.2 146.0L707.6 147.0L713.3 146.6L720.0 149.7L717.1 153.3L712.8 153.1L711.6 156.1L707.6 157.1L708.0 162.1L705.1 160.5L697.7 160.0L692.2 161.5L691.2 162.1L688.1 164.3L683.7 160.5L681.9 159.1L676.8 159.5L670.8 156.1L666.5 156.9L666.5 163.3L661.2 162.2L656.2 158.6Z" fill="#d2e6cb"/>
<path d="M675.4 171.3L677.7 173.5L681.6 170.4L684.5 169.9L686.7 170.3L689.7 169.8L693.1 170.8L698.9 170.3L698.2 170.6L693.1 171.5L692.2 174.0L690.5 175.8L689.3 179.4L684.5 181.1L684.0 183.0L677.7 183.6L674.9 183.0L676.3 180.2L674.8 180.0L674.2 177.5L675.1 174.9Z" fill="#f2f6f0"/>
<path d="M676.1 190.8L678.9 187.4L678.2 186.0L674.9 183.0L677.7 183.6L684.0 183.0L684.5 181.1L689.3 179.4L690.5 175.8L692.2 174.0L693.1 171.5L698.2 170.6L699.9 171.5L702.5 173.2L698.2 174.9L698.2 178.3L698.4 180.9L696.5 182.8L692.2 186.4L689.8 187.4L691.0 190.0L688.5 192.4L688.3 194.1L680.2 196.3Z" fill="#79a962"/>
<path d="M688.3 194.1L688.5 192.4L691.0 190.0L689.8 187.4L692.2 186.4L696.5 182.8L698.4 180.9L698.2 178.3L698.2 174.9L702.5 173.2L704.2 173.2L707.6 174.0L706.8 178.3L705.9 180.9L708.0 181.8L707.8 184.7L712.8 187.1L715.3 187.2L721.7 188.6L721.5 186.2L723.1 187.9L728.2 188.1L728.2 186.4L732.5 184.0L735.9 184.3L737.3 185.7L736.8 187.4L733.3 189.5L731.6 193.1L730.4 196.3L729.2 196.5L724.8 208.3L699.1 225.4L683.7 199.7Z" fill="#79a962"/>
<path d="M707.8 184.7L709.4 182.3L711.9 181.9L717.1 185.2L721.7 186.2L721.7 188.6L715.3 187.2L712.8 187.1Z" fill="#a9d09a"/>
<path d="M723.1 187.9L723.4 186.0L727.7 186.4L728.2 188.1Z" fill="#a9d09a"/>
<path d="M722.5 193.7L721.3 192.0L722.2 188.8L724.4 190.7L728.9 191.2L727.3 192.7L728.5 193.6L729.2 196.5L724.8 199.7L723.1 196.7Z" fill="#a9d09a"/>
<path d="M729.2 196.5L730.4 196.3L731.6 193.1L733.3 189.5L736.8 187.4L737.3 185.7L739.3 186.9L739.7 189.6L737.6 192.9L739.3 192.7L741.0 196.1L744.0 197.7L742.8 197.2L742.1 199.2L740.0 200.1L738.0 202.3L739.5 206.2L738.8 208.1L740.4 210.4L740.5 213.4L739.5 216.9L736.8 220.3L724.8 208.3Z" fill="#f2f6f0"/>
<path d="M739.5 216.9L740.5 213.4L740.4 210.4L738.8 208.1L739.5 206.2L738.0 202.3L740.0 200.1L742.1 199.2L742.8 200.6L744.1 200.6L743.4 204.0L745.3 202.8L747.9 202.5L750.0 204.2L751.5 207.4L750.5 209.5L746.2 210.9L745.8 213.1L746.4 213.4L741.9 213.4L742.1 222.9L743.8 224.4L745.5 223.4L740.2 222.0Z" fill="#a9d09a"/>
<path d="M744.0 197.7L742.8 197.2L742.1 199.2L742.8 200.6L744.1 200.6L743.4 204.0L745.3 202.8L747.9 202.5L750.0 204.2L751.5 207.4L750.5 209.5L752.2 209.3L754.7 209.2L754.4 206.8L753.0 204.9L750.5 202.3L748.8 200.6L749.6 198.9L747.0 198.4L745.5 195.6L744.8 196.1Z" fill="#a9d09a"/>
<path d="M745.5 195.6L747.9 195.1L751.0 194.1L753.4 194.9L755.6 197.2L762.5 203.2L759.0 218.6L750.1 220.3L749.6 216.0L750.6 215.3L752.2 214.3L754.7 212.9L754.7 209.2L754.4 206.8L753.0 204.9L750.5 202.3L748.8 200.6L749.6 198.9L747.0 198.4Z" fill="#d2e6cb"/>
<path d="M746.2 210.9L750.5 209.5L752.2 209.3L754.7 209.2L754.7 212.9L752.2 214.3L750.6 215.3L749.6 216.0L747.0 216.9L746.4 213.4L745.8 213.1Z" fill="#d2e6cb"/>
<path d="M742.1 222.9L743.8 224.4L745.5 223.4L750.5 228.9L749.6 232.3L741.9 230.6L741.9 222.4Z" fill="#79a962"/>
<path d="M696.5 166.3L699.9 164.5L703.4 163.8L708.0 162.1L707.6 157.1L711.6 156.1L712.8 153.1L717.1 153.3L720.0 149.7L721.3 150.7L725.6 152.6L726.5 155.2L730.8 157.1L734.2 158.3L735.9 160.9L741.9 161.0L750.5 162.7L754.7 161.4L759.0 161.0L762.1 159.1L761.6 156.9L765.0 157.3L769.3 155.7L771.9 154.3L775.6 154.0L773.6 151.9L771.0 152.3L768.5 151.6L770.7 148.7L772.4 149.2L775.3 147.8L776.2 144.4L777.5 142.7L782.2 142.4L786.4 143.6L789.0 148.7L794.1 150.2L795.0 152.3L798.4 151.6L801.3 151.3L800.0 154.3L796.5 156.4L795.5 158.6L795.0 160.5L794.3 161.4L792.6 161.4L789.9 162.1L788.0 162.4L784.7 164.6L783.2 165.7L779.6 167.2L784.7 182.6L772.7 198.0L755.6 197.2L753.4 194.9L751.0 194.1L747.9 195.1L745.5 195.6L744.8 196.1L744.0 197.7L741.0 196.1L739.3 192.7L737.6 192.9L739.7 189.6L739.3 186.9L737.3 185.7L735.9 184.3L732.5 184.0L728.2 186.4L727.7 186.4L723.4 186.0L721.7 186.2L717.1 185.2L711.9 181.9L709.4 182.3L708.0 181.8L705.9 180.9L706.8 178.3L707.6 174.0L704.2 173.2L702.5 173.2L699.9 171.5L698.9 170.3Z" fill="#3c5426"/>
<path d="M720.0 149.7L721.3 150.7L725.6 152.6L726.5 155.2L730.8 157.1L734.2 158.3L735.9 160.9L741.9 161.0L750.5 162.7L754.7 161.4L759.0 161.0L762.1 159.1L761.6 156.9L765.0 157.3L769.3 155.7L771.9 154.3L775.6 154.0L773.6 151.9L771.0 152.3L768.5 151.6L770.7 148.7L765.9 147.8L755.6 149.2L753.0 147.8L745.8 147.5L745.3 145.8L739.3 144.9L737.6 148.9L732.1 147.3L728.2 147.3L724.8 148.3L721.0 149.7Z" fill="#d2e6cb"/>
</g>
<path d="M561.0 172.3L559.5 170.8L557.9 170.3L555.4 170.6L555.5 168.0L554.3 167.5L555.4 165.1L555.5 162.2L554.7 160.3L556.9 159.1L558.8 159.7L560.7 159.3L562.6 159.3L564.6 159.5L567.5 159.7L568.4 157.8L568.5 155.5L566.8 153.5L564.6 152.3L562.5 151.3L565.1 150.4L567.9 150.6L568.2 148.9L570.9 149.2L573.2 148.0L574.9 146.5L576.8 146.0L578.5 144.1L580.0 142.5L582.6 142.2L585.0 142.2L585.3 139.8L584.5 137.2L585.3 136.2L587.1 135.8L588.8 135.2L588.4 137.2L589.1 138.9L587.7 140.1L589.4 141.5L592.0 140.8L594.9 141.7L596.8 140.7L598.9 140.6L600.7 140.9L602.3 140.1L604.2 140.8L606.9 139.4L606.7 137.2L607.6 135.7L609.3 135.2L611.5 136.2L612.4 134.3L610.9 132.9L613.4 132.1L615.1 132.4L616.9 132.3L618.6 132.1L620.4 131.6L622.3 131.4L619.4 130.4L617.7 130.3L616.0 130.5L614.0 130.7L611.9 130.6L610.0 131.4L608.4 130.9L607.1 129.8L607.4 126.9L609.1 124.7L611.1 124.3L612.6 123.0L614.1 122.0L612.2 121.3L610.2 120.9L608.3 121.5L606.9 123.0L605.6 124.3L604.0 125.2L602.5 126.5L600.7 127.3L600.2 129.5L602.8 131.4L601.8 132.4L600.5 133.9L598.9 134.8L598.9 137.2L597.7 137.9L595.4 138.1L592.9 139.1L592.4 137.6L590.6 135.0L589.4 132.9L588.6 132.1L587.2 132.9L585.8 133.8L584.3 134.5L581.7 134.5L580.2 133.3L579.2 130.4L579.2 127.8L581.0 127.2L582.6 126.1L584.6 125.0L586.9 124.7L588.3 123.3L590.3 122.7L591.2 121.0L592.9 120.1L594.4 119.4L595.4 118.0L598.0 116.5L599.7 115.6L601.4 114.8L603.5 113.9L605.7 113.7L607.4 113.3L609.0 112.6L610.9 112.7L613.0 112.7L615.1 112.2L617.2 112.8L619.4 112.5L621.5 113.3L623.7 113.6L625.4 114.3L627.1 115.1L628.9 114.8L630.6 115.1L632.3 115.6L634.4 116.0L636.2 117.2L638.3 117.5L640.8 118.4L639.1 120.4L637.4 120.8L635.7 120.9L634.0 120.5L632.3 120.9L630.6 120.6L628.0 120.1L629.5 121.0L630.2 122.7L633.1 123.7L635.7 124.4L637.8 123.7L640.0 123.5L639.1 121.3L641.1 120.9L642.9 120.1L644.6 119.7L646.3 120.1L645.6 118.4L646.0 116.7L647.6 117.4L649.4 117.5L651.1 117.7L652.8 118.2L654.5 117.8L656.2 117.5L658.3 117.8L660.2 117.1L662.2 117.0L664.0 116.9L665.7 116.7L667.4 116.9L669.1 116.5L670.8 116.9L672.5 116.7L674.1 115.8L675.1 114.4L677.1 114.2L679.1 115.0L681.1 114.8L683.1 115.9L685.4 116.1L687.6 117.2L688.8 115.8L687.5 114.8L686.2 113.7L685.4 112.0L687.1 110.5L688.8 109.0L690.5 109.0L692.2 109.3L693.7 110.1L695.3 110.3L694.6 112.4L695.2 114.2L695.5 116.1L698.2 116.3L698.2 113.2L696.5 111.0L699.1 109.8L701.6 110.7L703.4 111.5L704.2 110.2L706.3 109.9L708.5 109.8L709.4 108.1L711.2 107.7L713.1 108.0L715.0 108.2L716.9 107.0L718.8 107.4L717.9 106.4L719.6 105.5L721.4 105.6L723.1 104.9L724.8 104.7L726.5 104.5L728.2 104.5L729.9 104.3L731.6 104.1L733.3 103.8L735.0 103.5L736.7 103.2L738.5 103.1L740.2 103.0L741.8 102.0L743.5 101.8L745.3 101.9L747.0 101.2L748.8 101.1L750.5 101.1L752.3 101.3L753.9 102.1L755.6 101.9L757.3 103.0L759.1 102.4L760.7 102.8L762.8 103.7L765.0 104.0L764.5 105.6L765.0 107.2L762.9 107.5L760.7 107.9L762.9 107.7L765.0 108.4L766.7 107.9L768.4 107.9L770.2 108.3L771.9 107.9L773.6 108.1L775.5 108.3L777.4 108.5L779.4 108.6L781.3 109.0L783.3 108.8L785.4 108.8L787.3 108.1L789.0 108.6L790.7 109.3L792.0 110.4L792.4 112.0L794.1 112.7L795.9 112.5L798.4 111.5L800.1 112.0L801.9 111.6L803.6 111.5L805.4 111.3L807.0 110.6L808.7 110.0L810.5 110.0L812.1 109.5L813.9 109.5L815.6 109.7L817.3 109.4L819.0 110.0L820.7 110.2L822.5 110.0L824.2 110.5L825.9 110.8L827.5 111.5L829.7 112.1L831.8 112.5L833.8 112.7L835.7 112.5L837.6 112.3L839.5 112.4L841.1 113.3L843.1 113.0L844.7 114.1L846.4 114.8L848.1 114.8L849.8 114.9L851.5 115.1L853.2 114.8L855.4 114.7L857.5 114.4L859.7 114.1L861.8 114.1L863.9 114.6L866.1 114.3L868.1 114.2L870.1 114.1L872.1 114.4L873.8 114.8L875.5 115.4L877.2 115.4L878.9 115.8L879.4 117.5L879.0 119.2L879.3 120.9L878.9 122.7L876.4 123.3L875.2 125.0L874.7 126.9L872.7 127.4L870.8 128.2L868.7 128.1L866.9 128.8L865.4 130.0L863.5 130.4L861.4 130.6L859.2 130.4L857.1 130.9L855.0 131.2L852.9 131.6L851.7 133.4L849.8 134.6L848.6 136.4L847.8 139.3L846.1 140.3L844.7 141.5L842.1 143.4L840.7 145.2L839.0 146.6L838.5 144.9L837.8 143.2L837.0 141.2L837.0 138.9L836.9 137.2L837.5 135.5L839.5 135.5L841.3 134.6L842.9 133.4L844.7 132.2L846.3 131.1L848.1 130.4L849.7 129.0L850.7 127.3L848.7 128.4L846.4 128.7L843.8 128.7L842.1 128.6L840.4 128.2L838.7 128.7L837.0 129.6L835.8 131.0L834.7 132.6L832.4 133.1L830.1 132.8L828.0 132.6L825.8 132.2L823.8 132.5L821.9 132.9L819.8 132.4L818.2 133.0L816.4 132.6L814.7 132.9L813.2 134.3L811.3 135.0L809.7 136.3L807.9 137.2L806.4 138.1L805.8 139.7L804.4 140.6L806.5 141.5L808.7 141.5L811.3 143.2L812.6 144.9L812.1 146.7L811.3 148.3L811.1 150.9L809.4 152.3L807.9 153.8L806.3 154.7L805.3 156.1L804.2 157.5L802.7 158.6L801.3 160.0L799.3 160.5L796.7 160.0L795.0 161.0L794.3 161.5L792.6 161.4L789.9 162.1L788.0 162.4L786.4 163.6L784.7 164.6L783.2 165.7L782.2 165.8L779.6 166.9L778.2 167.5L778.7 165.8L780.1 164.6L777.9 163.9L775.3 165.7L772.7 166.9L772.2 168.4L774.1 169.8L775.3 170.4L777.5 169.2L780.4 170.3L779.0 171.6L777.0 172.2L774.8 174.0L776.7 175.2L777.7 178.2L779.4 179.9L777.9 181.6L779.6 183.0L778.9 184.4L778.6 186.0L777.4 187.7L775.8 188.8L774.4 190.1L773.6 191.9L771.0 193.7L768.5 194.9L766.2 195.8L764.2 196.3L761.6 197.0L759.9 198.0L759.0 199.2L758.3 197.2L756.5 197.0L753.9 198.0L753.0 199.2L751.8 201.5L753.0 203.2L754.1 204.7L755.3 206.1L757.1 208.0L757.0 209.9L757.8 211.7L757.7 214.1L755.6 215.5L753.5 216.4L752.2 217.7L750.1 219.3L750.3 217.0L749.6 216.0L747.9 215.8L746.4 213.4L744.1 212.2L743.4 210.9L742.1 211.0L741.9 212.8L741.5 214.7L740.5 216.4L740.7 218.2L742.4 219.8L742.8 221.7L744.1 222.2L745.7 223.4L747.7 225.8L747.7 228.2L748.2 229.7L749.1 231.6L747.9 231.8L746.2 230.6L744.1 229.2L742.9 227.1L742.6 224.6L742.2 222.9L741.4 222.2L739.3 220.0L739.0 217.7L739.7 215.3L739.3 212.6L738.8 210.5L738.3 208.7L738.0 206.8L737.4 205.6L735.9 205.7L734.0 206.9L732.1 206.6L731.7 204.5L732.1 202.3L730.8 200.6L729.6 198.9L728.5 197.7L727.9 195.3L726.5 195.5L725.3 196.5L723.1 196.7L721.3 196.3L719.5 197.5L718.8 199.9L715.9 201.1L714.4 202.1L713.3 203.5L711.4 205.6L709.7 206.5L708.2 207.4L707.7 209.1L707.8 210.9L707.8 212.7L707.7 214.5L707.5 216.4L706.3 216.4L704.6 218.8L703.4 220.1L701.8 218.8L700.8 216.0L699.9 213.8L699.2 212.1L698.4 210.4L697.4 207.8L697.0 205.8L696.2 204.0L695.3 201.1L695.5 199.4L695.1 197.7L694.8 196.0L693.6 197.1L692.6 198.4L691.4 198.4L690.3 196.9L689.0 195.8L690.7 194.8L688.3 194.1L686.1 192.9L684.7 190.5L682.9 190.8L681.1 190.8L679.4 191.1L677.8 190.3L676.1 190.8L674.3 190.9L672.5 190.5L670.7 189.8L668.8 189.8L668.1 187.7L666.5 187.6L664.1 188.6L662.2 188.1L660.3 187.5L658.6 186.2L657.7 184.6L656.6 183.1L654.4 182.1L652.8 182.8L653.5 185.2L655.1 187.4L656.6 188.9L657.6 191.2L658.5 189.3L659.0 190.7L659.0 192.4L661.2 192.7L664.0 192.4L666.4 190.3L667.0 188.9L667.2 191.3L668.9 193.1L671.3 193.7L673.0 195.6L671.5 197.5L670.3 199.1L669.4 201.5L667.6 202.7L665.3 203.9L663.6 204.9L662.3 206.0L660.5 206.2L658.5 208.0L656.9 208.4L655.4 209.0L652.8 210.0L650.3 211.0L647.7 212.1L645.1 212.2L644.6 211.2L643.9 208.3L643.6 205.7L642.0 203.5L641.7 201.9L640.7 200.6L639.7 199.3L638.4 198.2L637.6 195.8L636.6 193.4L634.8 192.4L634.0 190.1L632.6 188.4L630.7 185.9L630.4 183.5L629.5 181.9L629.7 180.0L630.6 177.8L631.4 175.8L632.1 173.4L632.6 171.3L631.9 171.0L629.9 171.0L628.1 171.7L626.3 172.2L624.7 171.4L623.0 171.1L620.3 171.3L617.7 170.6L617.2 168.9L616.2 167.2L615.3 165.5L615.7 164.5L613.4 163.9L611.5 164.3L609.7 164.6L609.3 165.5L610.5 166.9L609.8 168.0L611.7 168.7L610.0 169.1L609.7 171.5L607.8 171.0L606.9 169.4L606.7 168.4L605.7 166.7L604.7 165.8L603.8 164.6L604.0 162.4L602.3 161.4L600.4 160.3L598.0 159.5L596.3 158.3L595.6 156.6L593.9 155.7L591.7 156.2L591.8 158.1L593.7 159.3L594.6 161.0L596.5 162.1L598.0 162.2L598.0 163.1L600.6 164.1L602.3 165.1L601.9 165.8L599.7 164.6L599.0 166.2L600.1 167.2L598.7 168.0L597.5 168.9L597.7 167.4L597.3 165.3L596.0 164.5L594.6 164.1L592.9 163.4L590.8 161.7L589.6 161.2L588.6 160.3L588.2 159.0L586.4 158.1L584.3 158.8L582.2 159.8L580.0 160.0L577.8 159.5L575.9 160.5L576.1 162.1L574.0 163.4L572.1 163.9L570.6 165.7L570.1 167.4L570.6 167.9L569.4 169.6L567.2 171.0L564.6 171.1L562.7 171.5L561.0 172.3Z" fill="none" stroke-width="1.3"/>
<path d="M618.6 162.7L617.7 161.2L618.6 159.7L619.6 159.0L621.3 156.7L622.8 154.9L624.6 154.2L627.1 155.0L628.0 156.2L626.4 156.2L628.2 157.8L629.7 157.6L631.4 156.7L633.1 156.6L634.8 153.8L637.7 153.1L636.0 154.9L635.2 156.4L634.5 157.4L636.7 158.1L638.8 159.5L641.7 161.4L641.9 162.7L640.0 163.6L637.4 163.6L634.8 163.6L632.3 162.7L630.6 161.9L628.0 162.1L625.4 162.4L622.8 163.4L620.4 163.4L618.6 162.7Z" fill="#fff" stroke-width="1.3"/>
<path d="M651.1 160.3L651.8 157.8L650.8 157.3L652.1 155.9L654.5 154.5L658.8 153.5L661.7 153.8L661.6 156.4L658.5 157.6L656.8 158.1L658.3 160.3L660.7 162.1L661.2 163.8L663.1 164.1L662.1 165.5L662.2 167.2L662.9 169.9L658.8 171.0L656.2 169.9L654.5 169.6L654.4 168.0L655.1 165.5L655.9 164.6L653.7 162.4L652.0 160.9L651.1 160.3Z" fill="#fff" stroke-width="1.3"/>
<path d="M560.8 148.2L563.4 147.7L566.3 147.3L568.9 147.0L571.0 147.0L573.0 146.3L572.1 145.3L573.5 143.9L571.1 143.2L570.8 142.2L569.9 140.8L568.4 140.1L567.9 138.8L566.3 138.1L566.0 137.2L567.5 135.5L564.6 135.2L565.3 133.6L562.9 133.6L562.0 133.6L561.0 135.0L560.0 136.4L561.0 137.7L561.2 139.3L562.4 140.0L564.9 140.0L565.1 141.2L565.6 142.5L563.7 142.7L562.5 143.6L563.4 144.6L561.7 145.4L564.6 146.0L565.5 146.3L563.2 146.3L560.8 148.2Z" fill="#4b6c32" stroke-width="1.3"/>
<path d="M560.3 144.6L560.2 142.7L560.3 141.5L561.2 140.6L560.2 139.4L558.3 139.3L556.4 139.8L555.9 141.0L553.6 141.5L553.3 142.9L554.2 143.9L553.0 145.1L553.8 145.8L556.0 145.6L558.6 144.8L560.3 144.6Z" fill="#79a962" stroke-width="1.3"/>
<path d="M529.5 121.8L531.4 121.4L532.9 120.3L534.9 120.7L536.9 120.4L538.9 120.6L541.0 120.1L543.2 120.1L545.6 120.9L547.3 122.5L545.2 123.9L543.7 124.2L542.1 124.7L540.4 124.7L538.9 125.4L537.2 125.4L535.5 125.0L533.8 124.7L531.7 124.5L532.9 123.5L531.2 123.1L529.5 122.8L532.1 122.3L529.5 121.8Z" fill="#d2e6cb" stroke-width="1.3"/>
<path d="M496.1 131.4L494.5 130.5L492.7 130.4L491.0 129.5L489.2 129.3L487.5 128.7L486.0 127.6L485.0 126.1L483.7 125.0L482.4 124.0L480.7 121.8L479.0 119.6L479.8 117.2L481.5 116.4L483.2 115.8L480.7 114.8L478.8 113.7L476.7 113.2L478.6 112.3L480.7 111.9L479.0 111.6L477.3 111.2L475.5 111.0L476.7 109.3L475.5 107.9L473.8 107.2L472.1 105.9L470.4 104.7L468.6 104.5L467.0 103.6L465.3 103.5L463.3 103.4L461.4 103.9L459.4 103.3L457.5 103.8L455.9 103.0L454.2 102.9L452.4 103.0L450.4 101.8L448.1 101.6L445.6 100.0L447.2 99.1L449.1 98.8L450.7 97.8L452.7 97.8L454.6 97.2L456.5 96.5L458.4 96.1L460.3 95.1L462.4 94.9L464.4 94.4L466.1 94.3L467.9 94.5L469.6 94.4L471.2 93.7L473.0 93.9L474.6 93.1L476.4 93.2L478.1 93.5L479.8 93.2L481.5 92.6L483.2 93.4L484.9 93.0L486.7 93.4L488.4 93.2L490.1 92.5L491.8 93.0L493.5 92.7L495.3 92.8L496.9 91.8L498.6 91.6L500.4 91.9L502.1 91.1L503.8 90.8L505.5 91.1L507.2 90.7L508.9 91.5L510.7 91.3L512.4 90.8L514.1 90.4L515.8 90.8L517.5 90.7L519.2 91.0L520.9 91.6L522.7 90.8L524.3 91.3L526.0 91.6L527.8 91.5L529.5 91.8L531.1 92.4L532.9 92.4L534.6 92.7L532.8 92.6L531.2 93.4L529.5 93.9L527.8 94.4L529.5 94.4L531.2 94.6L532.9 94.4L534.6 94.7L536.3 94.4L538.1 94.3L539.8 94.7L541.5 94.3L543.2 94.7L544.9 94.7L546.6 94.5L548.3 94.0L550.0 94.4L548.4 94.6L546.8 94.9L545.3 95.3L543.8 95.8L542.3 96.6L540.5 96.6L538.8 97.0L537.2 97.8L538.4 99.6L539.8 101.2L538.4 102.2L536.8 102.8L535.5 103.8L536.9 104.9L538.1 106.4L536.2 106.7L534.5 107.4L532.9 108.4L531.0 108.7L529.5 109.8L531.2 110.5L532.9 111.0L531.3 111.3L530.0 112.4L528.6 113.2L530.8 113.4L532.9 113.7L531.1 114.3L529.3 114.7L527.6 115.5L526.1 116.7L524.3 116.5L522.7 117.5L520.9 117.0L519.2 117.3L517.2 117.7L515.2 117.9L513.2 118.4L510.6 120.1L508.8 120.1L507.3 121.2L505.5 121.3L503.3 121.9L501.2 123.0L500.4 125.2L498.1 126.9L496.9 129.5L496.1 131.4Z" fill="#e2efdc" stroke-width="1.3"/>
<path d="M432.7 107.8L434.7 109.1L437.0 109.8L438.9 110.5L441.0 110.5L443.0 111.0L445.1 111.3L447.0 112.2L449.0 112.7L451.1 113.1L453.3 113.7L455.8 115.5L457.4 116.5L459.3 116.8L461.0 117.7L462.6 118.6L464.4 119.2L465.3 120.1L463.3 120.5L461.8 121.8L459.3 123.5L460.1 125.7L458.4 126.3L456.7 126.9L454.9 126.9L453.3 126.4L451.6 125.9L449.9 125.8L448.1 125.7L447.3 124.4L445.1 124.1L443.0 123.3L441.0 122.9L439.0 122.9L437.0 123.5L438.9 123.0L440.4 121.8L442.7 121.5L444.7 120.4L445.6 117.5L443.6 117.2L441.8 116.2L439.9 115.6L437.8 115.5L435.9 114.8L433.8 114.6L431.8 114.1L430.1 114.3L428.4 113.7L426.7 113.3L425.0 113.2L423.0 112.6L421.0 112.4L419.0 112.7L418.1 111.3L417.3 109.8L419.6 109.3L421.6 108.1L423.3 107.7L425.0 108.3L426.7 107.9L428.4 107.8L430.6 107.2L432.7 107.8ZM366.8 111.3L368.5 109.8L370.1 109.1L372.0 109.6L373.7 109.2L375.3 108.6L377.0 108.4L378.7 108.8L380.5 108.8L382.2 109.0L384.1 109.2L386.0 109.4L388.0 108.8L389.9 109.3L392.1 109.5L393.7 111.1L395.9 111.5L397.6 113.7L395.9 114.6L394.0 115.0L392.4 116.0L390.7 116.5L389.0 115.9L387.3 115.6L385.6 115.8L383.9 116.3L382.1 115.7L380.4 115.9L378.8 117.0L377.0 116.7L375.0 117.0L373.2 116.2L371.3 115.5L369.3 115.8L367.6 114.1L370.2 113.2L368.4 112.4L366.8 111.3ZM355.6 111.0L357.3 109.9L358.2 108.1L360.5 107.7L362.5 106.4L364.4 106.0L366.3 106.1L368.2 107.0L370.2 106.7L372.7 108.1L371.0 108.3L369.3 108.8L367.7 109.6L365.9 109.8L363.3 111.7L361.6 111.8L359.9 112.2L357.8 111.5L355.6 111.0ZM413.0 103.8L414.6 103.1L416.4 103.0L418.1 103.0L419.9 102.8L421.6 103.1L423.3 103.1L425.0 102.5L426.7 102.4L428.4 103.3L430.1 102.7L431.8 103.0L433.9 101.8L436.1 101.2L438.7 99.7L440.4 100.2L442.1 99.5L443.9 99.8L445.6 99.4L447.3 98.7L449.0 98.2L450.6 97.0L452.5 96.9L454.1 96.1L455.9 96.1L457.5 95.3L459.3 95.2L461.0 94.7L462.6 93.6L464.4 93.7L462.7 92.5L461.0 92.1L459.3 92.2L457.5 92.4L455.8 92.6L454.1 91.6L452.4 91.9L450.7 91.8L449.0 91.6L447.3 91.4L445.6 91.6L443.8 91.4L442.1 91.9L440.4 91.5L438.7 91.9L437.0 91.3L435.3 91.4L433.6 91.8L431.9 92.4L430.2 92.6L428.5 92.6L426.7 92.0L425.0 92.7L423.3 92.7L421.6 93.2L419.9 93.2L418.2 93.5L416.4 93.5L414.3 94.5L412.1 95.2L413.8 96.0L415.6 96.6L417.6 96.8L419.5 97.3L421.6 97.0L424.1 98.7L422.2 98.8L420.2 98.9L418.3 99.3L416.4 100.0L418.1 101.6L416.2 101.8L414.6 102.9L413.0 103.8ZM411.3 106.4L413.0 106.1L414.7 105.9L416.4 106.3L418.1 106.0L419.9 105.9L421.6 106.3L423.3 106.8L425.0 106.7L426.7 106.7L428.4 106.1L430.1 106.4L431.8 106.1L433.6 106.4L432.7 103.5L431.0 103.8L429.3 103.8L427.6 103.6L425.9 102.8L424.2 102.8L422.4 102.8L420.7 102.7L419.0 103.3L417.3 103.0L415.3 103.7L413.3 104.0L411.3 104.7L411.3 106.4ZM390.7 105.2L392.3 105.6L393.9 106.0L395.5 106.3L397.1 106.7L398.7 106.7L400.3 107.2L402.1 106.5L403.6 107.2L405.3 106.3L407.2 106.0L408.7 104.7L406.8 104.0L404.8 103.2L402.7 103.1L401.1 103.6L399.5 103.2L397.9 103.5L396.3 103.2L394.7 103.2L393.1 103.8L391.5 103.6L389.9 103.3L390.7 105.2ZM392.4 108.1L393.9 108.9L395.5 109.4L397.2 109.5L398.9 109.8L400.6 110.0L401.9 111.2L403.6 111.5L404.0 109.8L404.4 108.1L402.8 107.6L401.0 107.9L399.3 107.6L397.6 107.4L395.9 108.1L394.1 107.6L392.4 108.1ZM372.7 105.5L374.4 105.4L376.0 105.3L377.6 106.0L379.2 105.4L380.8 106.0L382.5 105.9L384.1 105.7L385.7 106.3L387.3 106.4L389.0 104.7L387.2 104.7L385.6 103.9L383.8 103.8L382.2 103.0L380.5 103.5L378.7 103.1L377.0 102.7L375.3 103.6L373.6 103.5L371.9 103.1L370.2 103.3L371.1 104.8L372.7 105.5ZM359.9 101.2L361.7 101.2L363.3 102.2L365.1 101.6L366.7 102.4L368.5 102.0L370.2 102.4L371.9 103.0L373.7 103.2L375.3 102.0L377.1 102.2L378.7 101.7L380.5 101.4L378.3 100.5L376.2 99.5L374.3 99.7L372.5 100.3L370.6 99.8L368.8 100.8L366.9 100.8L365.0 100.7L363.4 101.4L361.6 101.3L359.9 101.2ZM399.3 100.7L401.0 100.8L402.7 100.8L404.5 100.6L406.2 101.1L404.4 99.2L402.6 98.6L400.7 99.4L398.9 98.7L397.1 98.1L395.1 98.8L393.3 98.2L390.7 99.5L392.4 99.8L394.1 100.1L395.9 99.7L397.6 100.4L399.3 100.7ZM426.7 120.9L428.4 122.1L430.2 123.2L431.8 124.4L429.9 124.7L428.1 125.5L426.0 125.3L424.1 126.1L422.6 124.9L420.7 124.4L422.3 123.7L423.5 122.3L425.2 121.8L426.7 120.9ZM403.6 107.4L405.0 108.5L406.4 109.6L407.9 110.7L409.8 110.4L411.3 109.3L410.0 108.3L408.7 107.2L407.0 107.3L405.3 107.3L403.6 107.4Z" fill="#4b6c32" stroke-width="1.7"/>
<path d="M469.0 152.5L470.6 153.1L472.2 153.3L473.9 153.3L475.5 153.7L477.2 153.7L478.8 154.2L480.3 152.6L479.7 151.2L479.0 149.7L477.2 149.6L475.5 149.2L475.8 147.4L475.5 145.6L473.3 146.1L472.5 147.6L471.4 148.8L470.4 150.1L469.0 152.5Z" fill="#4b6c32" stroke-width="1.3"/>
<path d="M359.4 151.1L356.5 150.4L355.2 149.2L353.7 148.4L352.1 147.9L350.7 147.0L352.3 146.9L353.9 147.3L355.4 148.0L356.8 148.7L358.2 149.8L359.4 151.1Z" fill="#4b6c32" stroke-width="1.3"/>
<path d="M425.0 196.5L427.6 194.8L430.1 194.3L431.8 194.8L433.6 194.6L435.6 195.9L437.8 196.7L439.5 197.3L441.1 198.0L443.5 199.4L441.9 199.8L440.3 199.7L438.7 199.9L437.5 198.5L435.9 197.9L434.4 197.0L432.8 196.2L431.0 196.0L428.8 195.3L426.9 196.1L425.0 196.5Z" fill="#a9d09a" stroke-width="1.3"/>
<path d="M443.2 202.3L444.8 201.4L445.9 199.9L447.9 200.3L449.8 200.1L452.4 200.9L453.4 202.3L450.7 202.8L448.3 203.9L446.4 202.8L444.8 202.7L443.2 202.3Z" fill="#d2e6cb" stroke-width="1.3"/>
<path d="M436.5 202.5L438.2 203.1L440.1 203.0L439.0 203.3L436.5 202.5Z" fill="#a9d09a" stroke-width="1.3"/>
<path d="M455.5 202.5L458.2 202.7L457.2 203.3L455.5 203.2L455.5 202.5Z" fill="#a9d09a" stroke-width="1.3"/>
<path d="M437.2 188.1L438.7 188.4L437.3 189.5L437.2 188.1ZM436.6 190.8L437.5 192.4L437.7 191.0L436.6 190.8ZM439.6 190.7L441.3 192.5L440.9 191.5L439.6 190.7Z" fill="#d2e6cb" stroke-width="1.3"/>
<path d="M464.6 215.5L466.1 215.5L466.1 216.7L464.6 216.7Z" fill="#d2e6cb" stroke-width="1.3"/>
<path d="M591.8 168.7L593.7 169.0L595.5 168.8L597.3 168.4L596.5 171.1L594.2 170.4L592.0 169.6L591.8 168.7Z" fill="#5c8b44" stroke-width="1.3"/>
<path d="M584.6 163.6L587.4 163.8L586.8 165.4L587.0 167.0L585.0 167.4L585.1 165.5L584.6 163.6Z" fill="#5c8b44" stroke-width="1.3"/>
<path d="M585.3 160.5L586.9 160.3L586.9 163.1L585.5 162.4L585.3 160.5Z" fill="#5c8b44" stroke-width="1.3"/>
<path d="M610.9 173.0L612.4 173.6L614.0 173.6L615.7 173.5L612.6 174.2L610.9 173.0Z" fill="#a9d09a" stroke-width="1.3"/>
<path d="M625.9 173.9L628.0 173.7L629.9 172.8L628.7 174.2L626.3 174.6L625.9 173.9Z" fill="#a9d09a" stroke-width="1.3"/>
<path d="M659.7 111.5L661.6 112.4L663.6 112.8L665.7 113.1L667.5 113.0L669.3 113.1L667.7 112.2L666.5 111.0L668.2 109.6L670.0 108.1L671.6 106.9L673.6 106.1L675.1 104.7L676.8 104.2L678.5 104.2L680.2 104.1L681.9 103.8L683.8 103.8L685.4 103.0L687.0 102.3L688.8 102.1L687.1 101.9L685.4 102.1L683.7 102.3L682.0 102.7L680.2 102.2L678.5 102.3L676.8 102.6L675.0 102.7L673.4 103.3L672.0 104.3L670.3 104.6L668.7 105.2L667.4 106.4L665.2 107.1L663.1 108.1L661.8 109.2L660.5 110.3L659.7 111.5Z" fill="#79a962" stroke-width="1.3"/>
<path d="M728.2 97.8L729.8 98.8L731.5 99.4L733.4 99.7L735.0 100.4L736.7 99.9L738.5 100.0L740.2 99.7L741.9 99.9L743.6 99.2L745.3 99.2L747.0 99.0L748.8 98.2L750.5 97.3L748.9 96.4L747.0 96.3L745.3 96.1L743.7 95.1L741.9 94.9L740.2 94.8L738.5 95.2L736.8 94.5L735.0 94.4L733.3 94.9L731.5 95.6L729.7 96.5L728.2 97.8Z" fill="#79a962" stroke-width="1.3"/>
<path d="M806.1 105.5L807.5 106.5L809.0 107.1L810.7 107.4L812.1 108.1L813.8 107.3L815.6 107.1L817.2 106.5L819.1 106.3L820.7 105.5L818.9 105.2L817.3 104.4L815.6 103.8L813.7 104.1L811.7 104.1L809.9 104.8L808.1 105.4L806.1 105.5Z" fill="#79a962" stroke-width="1.3"/>
<path d="M262.3 115.8L263.9 116.5L265.6 116.7L267.4 116.7L269.1 117.3L270.9 117.9L272.5 118.9L274.7 119.2L276.8 119.6L278.4 120.1L279.9 120.8L278.3 121.0L276.8 121.8L275.1 123.7L273.4 123.6L271.7 123.0L270.0 122.7L268.3 122.3L266.6 121.6L264.8 121.8L262.3 122.7Z" fill="#79a962" stroke-width="1.3"/>
<path d="M813.8 155.2L816.4 154.3L816.4 152.1L815.6 150.1L817.3 149.7L816.9 147.7L816.1 145.8L815.7 144.1L815.6 142.4L814.9 140.8L813.5 143.2L814.2 145.8L814.3 147.9L813.8 150.1L813.8 151.8L814.0 153.5L813.8 155.2Z" fill="#79a962" stroke-width="1.3"/>
<path d="M794.8 175.8L795.9 174.6L797.7 173.2L799.4 173.5L801.0 173.0L803.2 172.8L804.9 170.3L805.8 171.0L807.9 169.8L809.9 167.9L810.4 165.0L810.9 163.4L812.6 163.1L813.0 164.8L813.8 166.2L813.2 168.4L812.0 170.3L811.8 172.7L810.4 174.0L809.6 173.5L808.2 174.6L806.1 174.6L804.9 174.9L803.6 176.6L802.0 175.4L799.3 175.1L797.2 175.4L794.8 175.8Z" fill="#79a962" stroke-width="1.3"/>
<path d="M810.4 162.9L812.1 162.4L813.3 161.0L816.1 162.1L818.1 161.3L819.8 159.8L818.1 158.6L816.8 157.5L815.1 157.0L813.7 156.1L813.0 158.1L811.3 160.0L810.4 162.9Z" fill="#79a962" stroke-width="1.3"/>
<path d="M792.9 177.0L795.2 175.9L796.7 177.1L795.8 178.5L795.5 180.2L794.1 180.6L793.6 178.3L792.9 177.0Z" fill="#79a962" stroke-width="1.3"/>
<path d="M797.6 177.5L799.5 176.8L801.0 175.4L801.3 176.1L799.7 176.8L798.4 178.0L797.6 177.5Z" fill="#79a962" stroke-width="1.3"/>
<path d="M776.3 194.6L777.4 192.0L778.7 190.7L779.6 191.2L778.7 193.7L777.5 196.5L776.3 194.6Z" fill="#79a962" stroke-width="1.3"/>
<path d="M786.8 169.4L788.2 168.4L790.5 167.9L791.1 169.4L792.3 170.6L792.3 173.5L790.5 173.9L789.0 174.7L787.3 175.1L787.0 173.2L787.6 170.4L786.8 169.4Z" fill="#79a962" stroke-width="1.3"/>
<path d="M756.6 201.1L758.3 199.7L760.7 200.3L759.5 202.3L757.3 202.7L756.6 201.1Z" fill="#3c5426" stroke-width="1.3"/>
<path d="M707.3 222.9L707.8 221.2L707.5 219.4L708.0 217.2L709.9 219.4L710.9 221.7L709.7 223.6L708.0 223.7L707.3 222.9Z" fill="#d2e6cb" stroke-width="1.3"/>
<path d="M776.2 206.6L776.8 204.9L776.7 203.2L777.5 202.1L779.9 202.3L780.1 204.9L778.9 206.9L779.1 209.5L780.6 209.7L783.0 211.7L782.2 211.9L780.4 210.4L777.9 210.7L777.2 209.2L776.2 206.6Z" fill="#a9d09a" stroke-width="1.3"/>
<path d="M779.6 222.0L781.2 220.9L782.3 219.3L784.7 218.6L785.6 217.2L786.2 218.7L787.3 220.0L787.2 221.6L787.0 223.2L785.4 224.4L783.4 223.2L782.2 220.8L779.6 222.0Z" fill="#a9d09a" stroke-width="1.3"/>
<path d="M779.6 213.8L781.6 216.0L780.4 217.6L779.6 216.0L779.6 213.8ZM783.0 212.6L785.6 212.6L785.5 214.6L784.7 216.5L783.5 215.2L783.0 212.6ZM772.7 216.9L774.3 216.1L775.3 214.6L775.3 216.0L773.8 216.8L773.4 218.6L771.9 219.4L772.7 216.9Z" fill="#a9d09a" stroke-width="1.3"/>
<path d="M733.8 224.4L735.7 225.1L737.6 225.1L739.7 227.5L741.0 229.1L742.8 230.2L744.5 231.3L746.2 232.3L747.9 233.5L749.0 234.9L749.6 236.6L750.8 238.3L752.0 240.0L752.1 242.0L752.0 243.9L749.8 244.1L748.6 242.7L747.0 241.7L745.6 240.4L744.5 238.8L743.4 237.1L742.4 235.4L741.4 233.8L740.2 232.3L738.5 229.7L737.5 228.3L735.9 227.5L734.9 225.9L733.8 224.4Z" fill="#a9d09a" stroke-width="1.3"/>
<path d="M750.8 245.6L752.2 244.3L754.1 244.8L756.1 244.6L757.9 245.5L759.9 245.8L761.6 245.7L763.3 245.8L765.1 246.3L766.7 247.2L766.7 248.9L764.7 248.7L762.7 248.6L760.7 248.2L758.7 247.5L756.5 247.4L754.7 247.2L753.0 246.7L750.8 245.6Z" fill="#a9d09a" stroke-width="1.3"/>
<path d="M767.6 247.9L769.3 248.4L768.5 249.1L767.6 247.9ZM769.5 248.4L771.0 247.9L772.8 247.6L774.4 248.0L774.4 249.2L772.3 248.9L770.2 249.4L769.5 248.4ZM775.8 248.6L777.7 248.9L779.5 248.8L781.3 248.2L780.4 249.2L778.3 249.6L776.2 249.1L775.8 248.6ZM782.2 251.6L783.5 250.0L785.2 248.7L787.0 248.6L788.7 248.4L787.2 249.5L785.6 250.3L783.8 250.9L782.2 251.6ZM774.4 250.4L777.5 250.6L776.2 251.5L774.4 250.4Z" fill="#a9d09a" stroke-width="1.3"/>
<path d="M757.3 231.3L757.5 233.2L758.3 234.9L758.6 237.0L759.4 239.0L762.1 239.8L764.2 239.5L766.7 240.9L769.3 240.5L769.7 238.9L770.3 237.4L770.3 235.4L771.9 233.1L773.1 232.3L772.4 229.7L772.7 227.3L774.8 225.1L773.3 223.8L772.2 222.2L770.7 222.7L769.3 224.1L768.1 225.4L765.9 226.3L764.2 228.5L762.7 229.3L761.3 230.1L759.4 231.1L758.3 230.6L757.3 231.3Z" fill="#a9d09a" stroke-width="1.3"/>
<path d="M775.0 243.4L777.0 243.6L777.2 241.3L776.7 239.1L777.5 240.8L778.7 242.1L781.3 241.7L779.6 239.1L778.2 236.6L779.7 236.1L781.3 235.7L779.4 235.8L777.5 235.4L776.3 233.1L777.9 231.8L779.6 231.7L781.3 231.4L783.0 231.7L784.7 231.3L783.7 233.1L782.0 233.3L780.4 233.1L778.7 232.9L777.0 233.0L775.8 234.0L775.0 235.6L775.0 237.4L774.1 239.1L774.5 241.3L775.0 243.4Z" fill="#a9d09a" stroke-width="1.3"/>
<path d="M789.0 230.9L790.7 232.6L790.0 235.4L789.0 233.1L789.0 230.9ZM786.4 239.5L788.5 240.2L787.8 239.1L786.4 239.5ZM789.9 239.7L792.0 240.3L794.1 240.0L792.6 238.9L790.7 238.8L789.9 239.7Z" fill="#a9d09a" stroke-width="1.3"/>
<path d="M794.8 236.4L796.4 235.9L797.6 234.7L800.3 235.5L800.8 237.7L801.9 239.7L803.2 238.6L804.6 237.4L806.1 236.6L807.8 237.2L809.6 237.8L812.1 238.5L814.2 239.0L816.0 240.1L818.1 240.5L819.5 241.4L820.7 242.6L823.3 244.3L823.3 246.8L825.0 248.1L826.7 249.4L827.7 250.7L828.9 251.8L826.7 251.6L825.0 250.9L823.3 251.1L822.0 249.7L820.7 248.2L818.9 247.9L817.3 247.2L816.1 249.4L813.8 249.8L812.1 249.6L809.6 248.0L807.0 248.4L807.9 246.0L807.2 244.2L806.1 242.7L804.5 242.0L802.7 241.5L800.9 241.3L799.3 240.5L796.7 239.0L799.3 237.8L797.2 237.9L794.8 236.4Z" fill="#a9d09a" stroke-width="1.3"/>
<path d="M825.0 243.4L827.5 242.6L829.4 242.2L831.0 241.2L830.1 243.4L828.3 243.8L826.7 244.6L825.0 243.4ZM828.9 238.8L830.6 239.3L831.8 240.5L831.3 241.2L830.4 239.7L828.9 238.8Z" fill="#d2e6cb" stroke-width="1.3"/>
<path d="M837.0 244.6L837.8 245.6L836.5 245.3ZM839.5 246.8L841.4 246.9L843.0 247.7L842.1 248.6L839.5 246.8ZM843.8 249.4L846.1 250.4L844.3 250.8L843.8 249.4ZM845.5 248.6L847.2 250.3L846.4 248.2Z" fill="#a9d09a" stroke-width="1.3"/>
<path d="M855.8 259.4L857.0 260.6L856.3 260.7ZM857.5 261.4L859.1 264.0L858.0 262.3Z" fill="#a9d09a" stroke-width="1.3"/>
<path d="M851.5 268.6L853.0 270.1L854.8 271.2L856.7 272.2L855.8 272.5L854.4 271.5L853.0 270.6L851.9 269.3L851.5 268.6Z" fill="#a9d09a" stroke-width="1.3"/>
<path d="M874.3 264.0L876.5 263.6L876.0 265.2L874.3 264.7Z" fill="#a9d09a" stroke-width="1.3"/>
<path d="M764.5 271.7L764.5 273.4L765.0 275.0L765.7 276.5L765.0 278.9L765.7 280.4L766.2 282.0L767.2 283.6L767.6 285.4L768.1 286.9L768.6 288.5L768.2 290.0L767.6 291.6L769.3 293.6L772.4 294.1L774.0 293.7L775.3 292.8L777.0 292.1L778.7 291.9L780.5 292.0L782.3 292.1L783.4 290.2L784.9 289.8L786.4 289.3L788.2 289.4L789.9 288.6L791.6 288.3L793.4 287.9L795.3 288.0L796.8 288.7L798.4 288.8L800.5 290.2L802.2 292.8L803.4 293.8L804.9 291.6L806.7 289.7L807.0 291.9L806.1 294.3L807.9 295.0L809.9 296.5L810.4 298.8L813.0 299.8L814.7 300.2L816.4 300.5L818.8 298.9L821.2 301.0L823.3 299.4L825.2 298.6L827.4 298.2L827.9 295.2L829.1 293.8L829.6 292.1L831.1 291.0L831.8 289.3L832.7 287.9L832.9 286.2L833.7 284.7L833.7 283.0L833.2 281.4L833.4 279.7L832.9 278.2L831.0 276.0L830.3 274.0L828.9 272.5L826.7 272.2L826.3 270.6L825.5 269.1L823.8 267.9L822.1 266.7L821.0 265.4L820.7 263.6L820.1 261.7L819.7 259.7L818.0 258.3L816.6 257.1L816.1 255.5L815.8 253.8L814.7 252.3L813.7 253.7L813.7 255.4L813.4 257.1L813.2 258.8L812.6 260.5L812.8 262.3L811.8 264.0L809.2 263.8L806.7 261.9L804.4 260.7L802.7 259.5L803.6 257.6L804.9 254.9L802.7 254.6L800.9 254.5L799.3 253.9L796.4 253.4L794.0 255.4L793.1 257.3L792.8 259.4L790.7 259.4L788.5 257.8L786.4 258.2L785.1 259.6L783.9 261.1L782.2 263.1L780.1 264.5L779.6 266.2L778.2 267.4L775.3 268.4L773.3 268.7L771.4 269.5L770.0 270.2L768.5 270.8L766.2 271.5L764.5 271.7Z" fill="#4b6c32" stroke-width="1.3"/>
<path d="M818.5 303.7L821.6 304.4L824.6 304.1L824.6 306.3L823.3 308.0L821.9 308.7L819.5 306.8L819.3 305.1L818.5 303.7Z" fill="#4b6c32" stroke-width="1.3"/>
<path d="M866.4 292.9L867.8 294.3L869.3 296.0L870.2 297.4L871.9 297.9L874.1 299.1L876.4 298.6L875.3 301.1L873.6 301.8L872.1 304.2L870.7 305.3L869.9 304.7L870.4 302.5L868.3 301.1L869.7 299.4L869.5 297.6L867.8 295.3L866.4 292.9Z" fill="#79a962" stroke-width="1.3"/>
<path d="M866.4 303.4L869.2 304.7L868.7 305.9L866.9 308.0L866.3 309.0L864.0 310.2L863.2 312.5L861.0 313.8L858.9 313.8L857.5 313.0L855.8 312.8L856.2 311.4L857.7 310.6L858.9 309.4L860.7 308.4L862.7 307.7L864.4 305.6L865.4 304.1L866.4 303.4Z" fill="#79a962" stroke-width="1.3"/>
<path d="M303.2 200.1L305.1 200.6L304.2 201.5L303.2 200.1ZM302.2 198.2L303.4 198.5L302.5 198.9L302.2 198.2ZM299.4 197.0L300.5 197.5L299.8 197.5ZM296.9 196.0L297.7 196.0L297.4 196.5Z" fill="#3c5426" stroke-width="1.3"/>
<path d="M330.3 249.1L331.0 249.4L330.6 249.9ZM332.2 250.6L332.7 251.0L332.3 251.1ZM262.3 261.4L263.1 262.4L262.3 262.8ZM574.5 166.2L575.9 165.6L576.6 166.2L575.7 166.7L574.7 166.5ZM572.7 167.4L573.3 167.0L573.2 167.5ZM413.7 234.3L415.1 234.7L414.2 235.7ZM415.4 234.7L416.1 235.2L415.6 235.4ZM528.6 205.2L529.7 206.5L530.3 208.0L531.2 205.7ZM541.5 185.5L543.4 184.8L545.6 185.2L547.5 184.3L546.0 185.7L544.0 186.4ZM665.3 269.8L666.2 270.3L665.7 270.5ZM668.8 268.3L669.6 268.9L669.1 269.1ZM637.7 244.3L638.4 245.0L637.9 245.1ZM665.5 241.7L665.8 242.1L665.3 242.1ZM585.2 227.7L585.8 228.2L585.3 228.5ZM581.7 233.3L582.1 233.8L581.7 234.0ZM644.8 253.5L645.1 254.4L644.6 254.2ZM465.3 205.7L465.8 206.2L465.1 206.6ZM465.9 208.6L466.3 209.3L465.8 209.2ZM466.1 210.0L466.3 210.5L465.9 210.4ZM468.5 211.2L468.7 211.7L468.3 211.6ZM462.9 203.9L463.4 204.7L462.9 204.5ZM558.6 127.3L559.3 127.8L558.3 128.0ZM568.4 130.4L568.9 131.2L568.2 131.0ZM314.5 264.0L315.2 264.5L314.3 264.7ZM276.0 257.1L276.8 257.8L275.1 258.0ZM270.3 270.1L270.8 270.5L270.1 270.5ZM875.5 262.3L877.2 262.3L878.8 261.8L877.2 263.1ZM830.1 221.3L831.0 221.7ZM841.6 222.2L841.9 222.4ZM801.0 221.2L801.2 221.5ZM818.5 210.9L818.8 211.2L818.3 211.2ZM866.9 231.4L867.3 231.8ZM857.5 218.6L857.9 218.9ZM863.9 221.8L864.2 222.0Z" fill="#a9d09a" stroke-width="1.3"/>
<path d="M655.1 254.6L655.3 256.2L656.2 257.6L657.1 260.6L656.1 262.1L655.6 264.0L655.0 266.1L654.4 268.3L654.0 270.3L653.1 272.3L652.5 274.3L651.3 276.7L649.8 277.3L648.2 277.7L646.0 276.0L645.9 274.2L645.3 272.5L645.6 270.8L646.3 269.1L646.1 267.0L646.0 264.8L646.7 261.9L648.2 261.6L649.7 261.1L651.6 259.5L652.7 257.3L653.9 255.9L655.1 254.6Z" fill="#e2efdc" stroke-width="1.3"/>
<clipPath id="cgb"><path d="M560.8 148.2L563.4 147.7L566.3 147.3L568.9 147.0L571.0 147.0L573.0 146.3L572.1 145.3L573.5 143.9L571.1 143.2L570.8 142.2L569.9 140.8L568.4 140.1L567.9 138.8L566.3 138.1L566.0 137.2L567.5 135.5L564.6 135.2L565.3 133.6L562.9 133.6L562.0 133.6L561.0 135.0L560.0 136.4L561.0 137.7L561.2 139.3L562.4 140.0L564.9 140.0L565.1 141.2L565.6 142.5L563.7 142.7L562.5 143.6L563.4 144.6L561.7 145.4L564.6 146.0L565.5 146.3L563.2 146.3L560.8 148.2Z"/></clipPath>
<g clip-path="url(#cgb)" stroke-width="1.0">
<path d="M565.4 139.8L566.1 139.4L567.1 138.4L570.6 136.4L556.9 131.2L556.9 140.6Z" fill="#79a962"/>
<path d="M565.5 142.5L565.3 144.1L566.0 145.6L565.5 147.0L560.3 146.6L560.3 142.4Z" fill="#a9d09a"/>
</g>
<path d="M560.8 148.2L563.4 147.7L566.3 147.3L568.9 147.0L571.0 147.0L573.0 146.3L572.1 145.3L573.5 143.9L571.1 143.2L570.8 142.2L569.9 140.8L568.4 140.1L567.9 138.8L566.3 138.1L566.0 137.2L567.5 135.5L564.6 135.2L565.3 133.6L562.9 133.6L562.0 133.6L561.0 135.0L560.0 136.4L561.0 137.7L561.2 139.3L562.4 140.0L564.9 140.0L565.1 141.2L565.6 142.5L563.7 142.7L562.5 143.6L563.4 144.6L561.7 145.4L564.6 146.0L565.5 146.3L563.2 146.3L560.8 148.2Z" fill="none" stroke-width="1.3"/>
<clipPath id="cie"><path d="M560.3 144.6L560.2 142.7L560.3 141.5L561.2 140.6L560.2 139.4L558.3 139.3L556.4 139.8L555.9 141.0L553.6 141.5L553.3 142.9L554.2 143.9L553.0 145.1L553.8 145.8L556.0 145.6L558.6 144.8L560.3 144.6Z"/></clipPath>
<path clip-path="url(#cie)" d="M558.1 139.6L557.8 140.5L556.7 140.8L558.6 141.2L559.8 141.3L562.0 141.5L562.0 138.1L557.8 138.1Z" fill="#a9d09a" stroke-width="1.0"/>
<path d="M560.3 144.6L560.2 142.7L560.3 141.5L561.2 140.6L560.2 139.4L558.3 139.3L556.4 139.8L555.9 141.0L553.6 141.5L553.3 142.9L554.2 143.9L553.0 145.1L553.8 145.8L556.0 145.6L558.6 144.8L560.3 144.6Z" fill="none" stroke-width="1.3"/>
<clipPath id="cbo"><path d="M757.3 231.3L757.5 233.2L758.3 234.9L758.6 237.0L759.4 239.0L762.1 239.8L764.2 239.5L766.7 240.9L769.3 240.5L769.7 238.9L770.3 237.4L770.3 235.4L771.9 233.1L773.1 232.3L772.4 229.7L772.7 227.3L774.8 225.1L773.3 223.8L772.2 222.2L770.7 222.7L769.3 224.1L768.1 225.4L765.9 226.3L764.2 228.5L762.7 229.3L761.3 230.1L759.4 231.1L758.3 230.6L757.3 231.3Z"/></clipPath>
<path clip-path="url(#cbo)" d="M756.5 231.4L758.3 231.3L760.7 232.3L763.3 231.4L766.7 231.6L768.5 228.0L770.2 226.6L773.6 226.8L776.2 223.7L769.3 220.3L756.5 228.9Z" fill="#79a962" stroke-width="1.0"/>
<path d="M757.3 231.3L757.5 233.2L758.3 234.9L758.6 237.0L759.4 239.0L762.1 239.8L764.2 239.5L766.7 240.9L769.3 240.5L769.7 238.9L770.3 237.4L770.3 235.4L771.9 233.1L773.1 232.3L772.4 229.7L772.7 227.3L774.8 225.1L773.3 223.8L772.2 222.2L770.7 222.7L769.3 224.1L768.1 225.4L765.9 226.3L764.2 228.5L762.7 229.3L761.3 230.1L759.4 231.1L758.3 230.6L757.3 231.3Z" fill="none" stroke-width="1.3"/>
<clipPath id="cng"><path d="M794.8 236.4L797.6 234.7L800.3 235.5L801.9 239.7L806.1 236.6L809.6 237.8L812.1 238.5L818.1 240.5L820.7 242.6L823.3 244.3L823.3 246.8L826.7 249.4L828.9 251.8L826.7 251.6L823.3 251.1L820.7 248.2L817.3 247.2L816.1 249.4L813.8 249.8L812.1 249.6L809.6 248.0L807.0 248.4L807.9 246.0L806.1 242.7L802.7 241.5L799.3 240.5L796.7 239.0L799.3 237.8L797.2 237.9L794.8 236.4Z"/></clipPath>
<path clip-path="url(#cng)" d="M812.1 234.0L827.5 234.0L836.1 254.6L812.1 254.6L812.1 249.6L812.1 245.8Z" fill="#d2e6cb" stroke-width="1.0"/>
<path d="M794.8 236.4L797.6 234.7L800.3 235.5L801.9 239.7L806.1 236.6L809.6 237.8L812.1 238.5L818.1 240.5L820.7 242.6L823.3 244.3L823.3 246.8L826.7 249.4L828.9 251.8L826.7 251.6L823.3 251.1L820.7 248.2L817.3 247.2L816.1 249.4L813.8 249.8L812.1 249.6L809.6 248.0L807.0 248.4L807.9 246.0L806.1 242.7L802.7 241.5L799.3 240.5L796.7 239.0L799.3 237.8L797.2 237.9L794.8 236.4Z" fill="none" stroke-width="1.3"/>
<path d="M562.0 130.4L563.2 129.9L564.4 129.4L565.7 130.1L566.8 128.9L568.2 129.5L569.3 129.0L570.5 128.3L571.8 128.9L572.9 127.9L574.3 128.4L575.4 127.6L576.6 127.4L577.9 127.8L579.2 127.8L580.6 127.7L581.1 126.0L582.6 126.1L583.9 125.1L585.5 125.4L586.9 124.7L588.4 124.7L589.2 123.5L590.3 122.7L591.0 121.7L592.6 121.5L592.9 120.1L593.6 118.4L595.4 118.0L597.1 117.8L598.0 116.5L599.0 115.6L600.0 114.8L601.4 114.8L602.7 113.8L604.2 113.8L605.7 113.7L607.1 114.0L608.2 112.7L609.6 113.1L610.9 112.7L612.3 112.8L613.7 112.1L615.1 112.2" fill="none" stroke-width="1.6"/>
<path d="M444.7 306.3L444.8 307.9L444.2 309.4L444.0 311.2L442.6 312.5L441.7 313.8L441.3 315.4L442.1 317.0L441.4 318.8L441.8 320.0L442.6 321.0L442.8 322.2L444.4 323.0L444.7 324.8L445.8 325.5L447.4 325.6L448.1 327.0L449.3 327.4L450.7 327.3L451.5 328.6L453.3 328.0L455.0 328.9L456.2 328.3L457.5 328.0" fill="none" stroke-width="1.6"/>
<path d="M360.6 150.1L359.0 149.0L357.6 148.7L356.5 147.8L354.8 147.9L353.7 146.6L352.2 146.3L350.9 145.5L351.0 144.1L350.0 143.0L348.8 142.2L347.9 141.0L346.4 140.1L346.2 138.4L345.1 137.6L343.4 137.5L342.8 136.0L341.6 135.5L340.3 135.5L339.2 134.9L338.5 133.6L336.8 133.7L335.1 133.4L334.0 132.4L332.2 133.0L331.1 131.9L329.8 132.2L328.7 131.2L327.4 131.2L326.2 130.2L324.8 130.7L323.5 130.9L322.2 130.5L321.0 129.6L319.6 131.2L318.4 129.6L317.1 130.2L315.7 131.3L314.0 131.7L312.4 132.8L310.6 132.6" fill="none" stroke-width="1.5"/>
</g>
</svg></div><!--/map-->
<svg class="a" style="left:245px;top:62px" width="50" height="122" viewBox="245 62 50 122">
<g fill="#283f13">
<rect x="259.3" y="66.4" width="17.6" height="52" rx="8.8"/>
<rect x="249.8" y="83.4" width="35.8" height="18.2" rx="9.1"/>
<rect x="259.3" y="123.9" width="17.6" height="53.2" rx="8.8"/>
</g>
<g fill="#fff">
<path d="M268.1 70.6L273.6 78.8L262.6 78.8Z"/>
<path d="M268.1 115.3L273.6 106.5L262.6 106.5Z"/>
<path d="M253.6 92.5L262.4 87.2L262.4 97.8Z"/>
<path d="M281.6 92.5L272.8 87.2L272.8 97.8Z"/>
<rect x="262.8" y="132.1" width="10.8" height="2.6"/>
<rect x="266.8" y="128.1" width="2.6" height="10.6"/>
<rect x="262.8" y="165.8" width="10.8" height="2.6"/>
</g>
<g fill="none" stroke="#9a9ce6" stroke-width="0.6">
<circle cx="268.1" cy="150.1" r="8.2" fill="#4a4f8a" fill-opacity="0.08" stroke-width="1"/>
<ellipse cx="268.1" cy="150.1" rx="4" ry="8.2"/>
<line x1="268.1" y1="141.9" x2="268.1" y2="158.3"/>
<line x1="259.9" y1="150.1" x2="276.3" y2="150.1"/>
<path d="M261 146h14.2M261 154.2h14.2"/>
</g>
</svg><!--/nav-->

<div class="a" style="left:241px;top:382px;width:148.5px;height:19.5px;background:linear-gradient(to right,#fff 0%,#cfe0c6 25%,#9cbf8b 50%,#68985a 75%,#2e561a 100%)"></div>
<div class="a" style="left:242px;top:382px;font-size:14px;color:#000">0</div>
<div class="a" style="right:541.5px;top:382px;font-size:14px;letter-spacing:-0.4px;color:#000">78,327</div>
<div class="a" style="left:233px;top:411px;width:695px;height:1px;background:#e9e9e9"></div>
<div class="a h" style="left:252px;top:421.5px">Report View by Selection</div>
<div class="a h lnk" style="left:843px;top:421px">Customize</div>

<!-- table -->
<div class="a" style="left:233px;top:445px;width:695px;height:2px;background:#e9e9e9"></div><div class="a" style="left:233px;top:447px;width:695px;height:36.5px;background:#f4f4f4"></div>
<div class="a h" style="left:245px;top:450px;line-height:16px">Total:</div><div class="a h" style="left:242.5px;top:466px;line-height:16px">2141</div>
<div class="a h" style="left:326px;top:458px">Institutions</div>
<div class="a h" style="left:442px;top:458px">Countries/Regions</div>
<div class="a h" style="left:583px;top:451px;line-height:16px">Web of Science</div><div class="a h" style="left:591px;top:467px;line-height:16px">Documents</div>
<div class="a h" style="left:721px;top:457.6px;color:#5578a8">Cites</div>
<div class="a" style="left:758px;top:463px;width:0;height:0;border-left:4px solid transparent;border-right:4px solid transparent;border-top:4.5px solid #7092cc"></div>
<div class="a h" style="left:818px;top:458px">Cites/Paper</div>

<div class="a" style="left:233px;top:499px;width:695px;height:257px;background:#fafafa"></div>
<div class="a" style="left:233px;top:576px;width:695px;height:1px;background:#ececec"></div>
<div class="a" style="left:233px;top:622px;width:695px;height:1px;background:#ececec"></div>
<div class="a" style="left:233px;top:692px;width:695px;height:1px;background:#ececec"></div>
<div class="a" style="left:233px;top:724px;width:695px;height:1px;background:#ececec"></div>

<div id="rows"><div class="a num" style="right:640.2px;top:507.4px">141</div>
<div class="a inst" style="left:310px;top:501.9px">TONGJI<br>UNIVERSITY</div>
<div class="a inst" style="left:449.5px;top:501.9px">CHINA<br>MAINLAND</div>
<div class="a num" style="right:238.70000000000005px;top:507.4px">5,487</div>
<div class="a num" style="right:130.70000000000005px;top:507.4px">131,179</div>
<div class="a num" style="right:16.700000000000045px;top:507.4px">23.91</div>
<div class="a num" style="right:640.2px;top:545.9px">142</div>
<div class="a inst" style="left:310px;top:534.4px">NATIONAL<br>TAIWAN<br>UNIVERSITY</div>
<div class="a inst" style="left:449.5px;top:547.5px">TAIWAN</div>
<div class="a num" style="right:238.70000000000005px;top:545.9px">5,490</div>
<div class="a num" style="right:130.70000000000005px;top:545.9px">130,454</div>
<div class="a num" style="right:16.700000000000045px;top:545.9px">23.76</div>
<div class="a num" style="right:640.2px;top:590.9px">143</div>
<div class="a inst" style="left:310px;top:580.0px">SLAC NATIONAL<br>ACCELERATOR<br>LABORATORY</div>
<div class="a inst" style="left:449.5px;top:592.5px">USA</div>
<div class="a num" style="right:238.70000000000005px;top:590.9px">1,929</div>
<div class="a num" style="right:130.70000000000005px;top:590.9px">129,592</div>
<div class="a num" style="right:16.700000000000045px;top:590.9px">67.18</div>
<div class="a num" style="right:640.2px;top:649.0px">144</div>
<div class="a inst" style="left:310px;top:624.4px">UNIVERSITY OF<br>ELECTRONIC<br>SCIENCE &amp;<br>TECHNOLOGY<br>OF CHINA</div>
<div class="a inst" style="left:449.5px;top:644.0px">CHINA<br>MAINLAND</div>
<div class="a num" style="right:238.70000000000005px;top:649.0px">4,572</div>
<div class="a num" style="right:130.70000000000005px;top:649.0px">129,467</div>
<div class="a num" style="right:16.700000000000045px;top:649.0px">28.32</div>
<div class="a num" style="right:640.2px;top:700.4px">145</div>
<div class="a inst" style="left:310px;top:695.8px">CORNELL<br>UNIVERSITY</div>
<div class="a inst" style="left:449.5px;top:702.0px">USA</div>
<div class="a num" style="right:238.70000000000005px;top:700.4px">3,607</div>
<div class="a num" style="right:130.70000000000005px;top:700.4px">128,493</div>
<div class="a num" style="right:16.700000000000045px;top:700.4px">35.62</div>
<div class="a num" style="right:640.2px;top:732.4px">146</div>
<div class="a inst" style="left:310px;top:728.0px">UNIVERSIDADE<br>DE SAO PAULO</div>
<div class="a inst" style="left:449.5px;top:734.0px">BRAZIL</div>
<div class="a num" style="right:238.70000000000005px;top:732.4px">8,036</div>
<div class="a num" style="right:130.70000000000005px;top:732.4px">127,397</div>
<div class="a num" style="right:16.700000000000045px;top:732.4px">15.85</div></div><!--/rows-->
<svg id="orange2" width="928" height="756"><rect x="228.9" y="442.5" width="697.5" height="90.3" rx="2.5" fill="none" stroke="#e8772a" stroke-width="3.6"/></svg>
<div class="a" style="left:0;top:753px;width:928px;height:1px;background:#fff"></div><div class="a" style="left:0;top:754px;width:928px;height:2px;background:#000"></div>
</body></html>
